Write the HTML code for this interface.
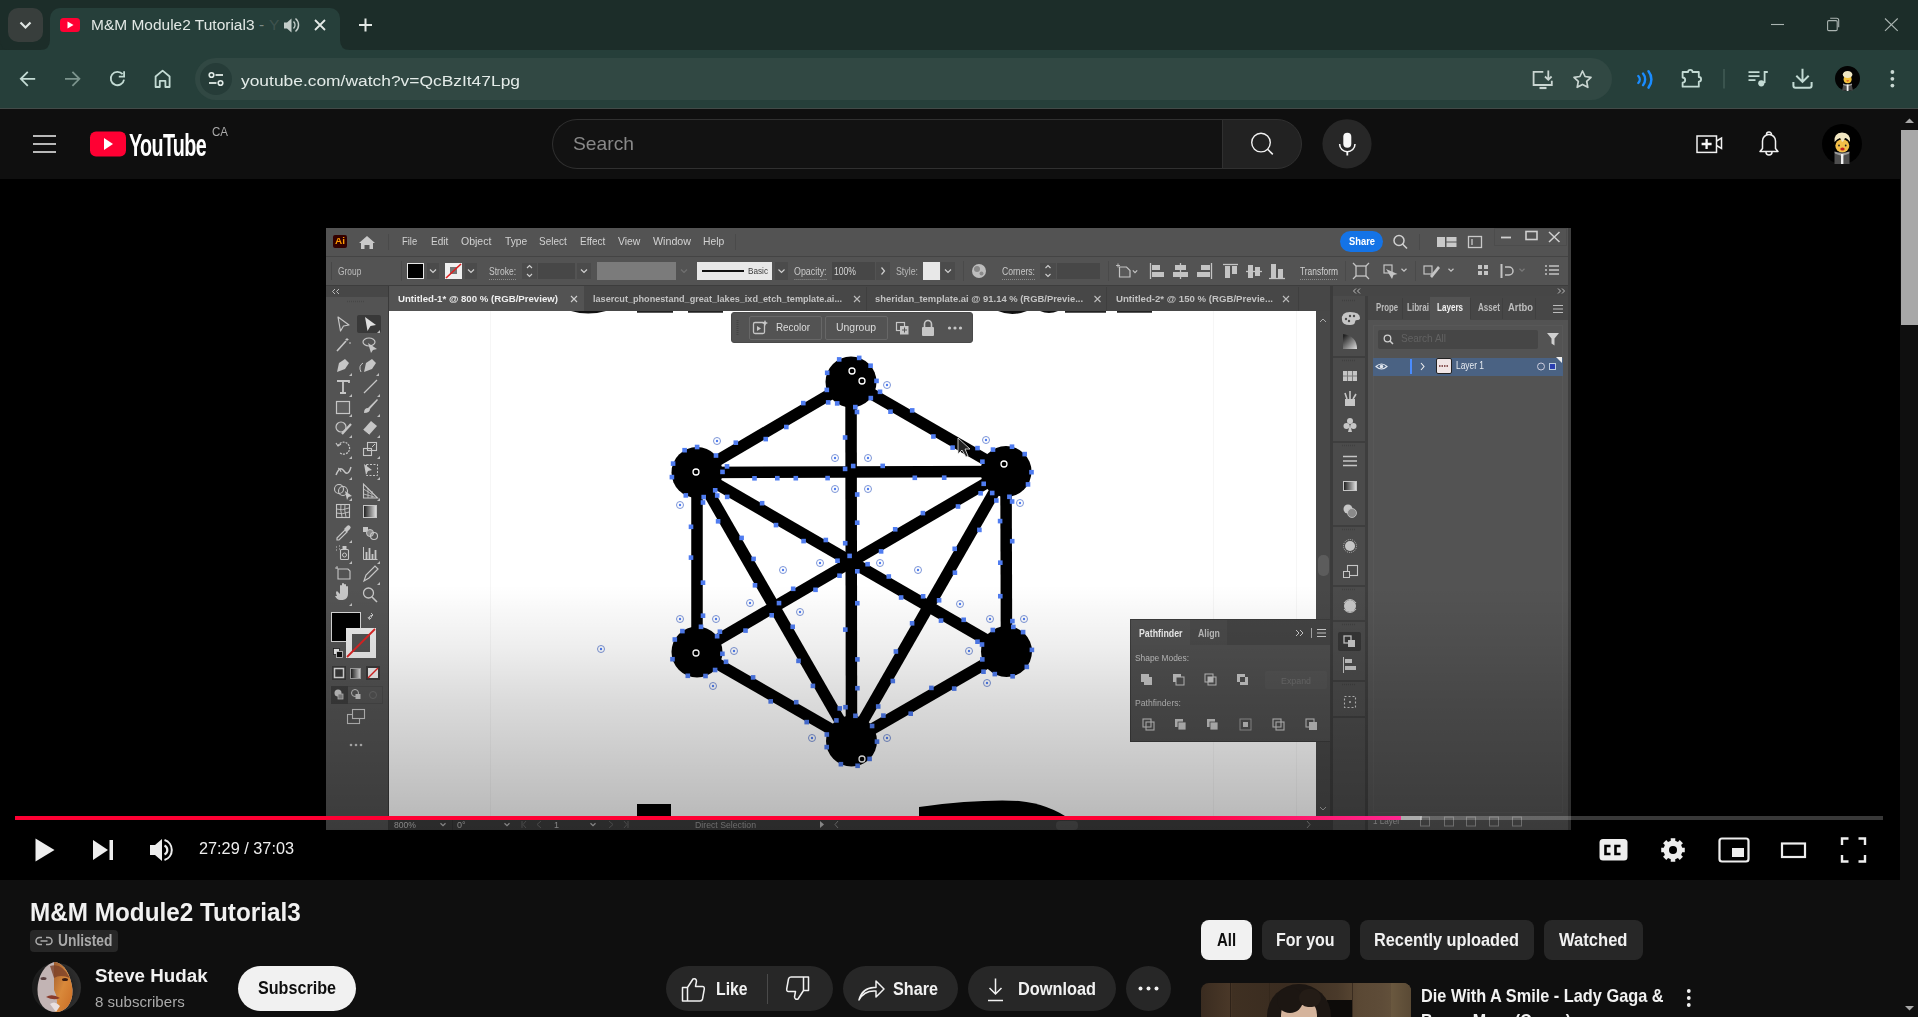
<!DOCTYPE html>
<html><head><meta charset="utf-8">
<style>
*{box-sizing:border-box;margin:0;padding:0}
html,body{width:1918px;height:1017px;overflow:hidden;background:#0f0f0f;font-family:"Liberation Sans",sans-serif}
.a{position:absolute}
svg{position:absolute;overflow:visible}
.t{position:absolute;white-space:nowrap;line-height:1}
</style></head><body>
<div class="a" style="left:0;top:0;width:1918px;height:50px;background:#1c2d29"></div>
<div class="a" style="left:8px;top:8px;width:35px;height:34px;border-radius:10px;background:#383e3c"></div>
<svg style="left:0;top:0" width="50" height="50"><path d="M20.5 22.5 L25.5 27.5 L30.5 22.5" fill="none" stroke="#dfe6e3" stroke-width="2.2"/></svg>
<div class="a" style="left:50px;top:8px;width:290px;height:44px;border-radius:10px 10px 0 0;background:#263f3a"></div>
<svg style="left:0;top:0" width="400" height="60">
 <path d="M40 50 Q50 50 50 40 L50 50 Z" fill="#263f3a"/>
 <path d="M340 40 Q340 50 350 50 L340 50 Z" fill="#263f3a"/>
</svg>
<div class="a" style="left:60px;top:18px;width:20px;height:14px;border-radius:3.5px;background:#ff0033"></div>
<svg style="left:0;top:0" width="100" height="50"><path d="M67.5 21.5 L73.5 25 L67.5 28.5Z" fill="#fff"/></svg>
<svg style="left:0;top:0" width="400" height="50">
 <path d="M284 22.5 h3 l4.5-4 v14 l-4.5-4 h-3z" fill="#dfe6e3" opacity="0.85"/>
 <path d="M293.5 21.5 a5 5 0 0 1 0 7" fill="none" stroke="#dfe6e3" stroke-width="1.5" opacity="0.85"/>
 <path d="M295.5 18.5 a8.5 8.5 0 0 1 0 13" fill="none" stroke="#dfe6e3" stroke-width="1.5" opacity="0.85"/>
 <path d="M315 20 L325 30 M325 20 L315 30" stroke="#e3e9e6" stroke-width="1.8"/>
 <path d="M359 25 h13 M365.5 18.5 v13" stroke="#e3e9e6" stroke-width="2"/>
</svg>
<svg style="left:0;top:0" width="1918" height="50">
 <path d="M1771 24.5 h13" stroke="#aab4b1" stroke-width="1.1"/>
 <rect x="1827.6" y="20.6" width="9.6" height="10" fill="none" stroke="#aab4b1" stroke-width="1.1" rx="1.2"/>
 <path d="M1830.2 18.2 h6.5 a2 2 0 0 1 2 2 v7" fill="none" stroke="#aab4b1" stroke-width="1.1"/>
 <path d="M1885 18.5 L1897.7 30.8 M1897.7 18.5 L1885 30.8" stroke="#aab4b1" stroke-width="1.1"/>
</svg>
<div class="a" style="left:0;top:50px;width:1918px;height:58px;background:#263f3a"></div>
<svg style="left:0;top:40px" width="30" height="20"><path d="M0 10 L0 0 Q0 10 10 10Z" fill="#1c2d29"/></svg>
<div class="a" style="left:0;top:108px;width:1918px;height:1px;background:#434a48"></div>
<svg style="left:0;top:0" width="200" height="108">
 <path d="M35.2 78.8 H21 M27.8 71.8 L20.8 78.8 L27.8 85.8" fill="none" stroke="#c3dbd4" stroke-width="1.8"/>
 <path d="M65 78.8 H79.2 M72.4 71.8 L79.4 78.8 L72.4 85.8" fill="none" stroke="#7c948d" stroke-width="1.8"/>
 <path d="M124.05 79.66 A6.7 6.7 0 1 1 122.6 74.2" fill="none" stroke="#c3dbd4" stroke-width="1.8"/>
 <path d="M118.8 76.7 H124.1 V71.2" fill="none" stroke="#c3dbd4" stroke-width="1.8"/>
 <path d="M155.6 87 V76.5 L162.6 70.6 L169.6 76.5 V87 H165.4 V80.8 H159.8 V87Z" fill="none" stroke="#c3dbd4" stroke-width="1.8" stroke-linejoin="round"/>
</svg>
<div class="a" style="left:195px;top:58px;width:1417px;height:42px;border-radius:21px;background:#314843"></div>
<div class="a" style="left:200px;top:63px;width:32px;height:32px;border-radius:16px;background:#263c38"></div>
<svg style="left:0;top:0" width="260" height="108">
 <circle cx="211.5" cy="75" r="2.3" fill="none" stroke="#e1ebe7" stroke-width="1.6"/>
 <path d="M215.5 75 H223" stroke="#e1ebe7" stroke-width="1.8"/>
 <circle cx="220.5" cy="83" r="2.3" fill="none" stroke="#e1ebe7" stroke-width="1.6"/>
 <path d="M209 83 H216.5" stroke="#e1ebe7" stroke-width="1.8"/>
</svg>
<svg style="left:0;top:0" width="1918" height="108">
 <path d="M1543.3 71.8 H1533.6 V85 H1551.8 V80.8" fill="none" stroke="#c9d5d1" stroke-width="1.8"/>
 <path d="M1539.5 88 h7" stroke="#c9d5d1" stroke-width="2.2"/>
 <path d="M1548.3 70.5 v9 M1545 76.5 l3.3 3.3 l3.3-3.3" fill="none" stroke="#c9d5d1" stroke-width="1.8"/>
 <path d="M1582.5 71 l2.6 5.5 5.9 0.8 -4.3 4.1 1.1 5.9 -5.3-2.9 -5.3 2.9 1.1-5.9 -4.3-4.1 5.9-0.8z" fill="none" stroke="#c9d5d1" stroke-width="1.7" stroke-linejoin="round"/>
 <path d="M1638.3 76 a5 5 0 0 1 0 7" fill="none" stroke="#1a8cff" stroke-width="2.4" stroke-linecap="round"/>
 <path d="M1643 73.6 a9 9 0 0 1 0 11.6" fill="none" stroke="#1a8cff" stroke-width="2.4" stroke-linecap="round"/>
 <path d="M1648.5 71.3 a13 13 0 0 1 0 16.3" fill="none" stroke="#1a8cff" stroke-width="2.5" stroke-linecap="round"/>
 <path d="M1682.6 72 h5.5 a2.2 2.2 0 0 1 4.4 0 h6.3 v5 a2.3 2.3 0 0 1 0 4.6 v5.1 h-16.2 v-4 a2.6 2.6 0 0 0 0-5.2z" fill="none" stroke="#c3dbd4" stroke-width="1.8" stroke-linejoin="round"/>
 <path d="M1724 69 v19.5" stroke="#4f6a63" stroke-width="1"/>
 <path d="M1748.5 72.2 h11 M1748.5 76.2 h11 M1748.5 80.2 h7" stroke="#c3dbd4" stroke-width="1.8"/>
 <path d="M1764.6 83 v-11 h3.2" fill="none" stroke="#c3dbd4" stroke-width="1.8"/>
 <circle cx="1761.3" cy="83.3" r="3.1" fill="#c3dbd4"/>
 <path d="M1802.5 68.7 v13 M1796.3 75.7 l6.2 6.2 l6.2-6.2" fill="none" stroke="#c3dbd4" stroke-width="2"/>
 <path d="M1793.4 82 v3.8 a2 2 0 0 0 2 2 h14.2 a2 2 0 0 0 2-2 v-3.8" fill="none" stroke="#c3dbd4" stroke-width="2"/>
 <circle cx="1847.5" cy="78.5" r="12.5" fill="#030303"/>
 <path d="M1843.5 84 h8 l1.5 6.5 h-11z" fill="#4a4a4a"/>
 <path d="M1843 83.5 l4.5 1.5 l4.5 -1.5 v1.5 l-4.5 1.5 l-4.5-1.5z" fill="#9a9a9a"/>
 <rect x="1846.7" y="84.5" width="1.8" height="6.5" fill="#f0f0f0"/>
 <ellipse cx="1847.6" cy="79.2" rx="4" ry="4" fill="#f2c33c"/>
 <ellipse cx="1847.6" cy="74.5" rx="4.8" ry="3.6" fill="#efe7c4"/>
 <path d="M1846.2 80.6 q1.5 1.8 3 0z" fill="#d02020"/>
 <circle cx="1892.4" cy="72" r="1.9" fill="#c9d8d3"/><circle cx="1892.4" cy="78.8" r="1.9" fill="#c9d8d3"/><circle cx="1892.4" cy="85.6" r="1.9" fill="#c9d8d3"/>
</svg>
<div class="t" style="left:90.70px;top:17.42px;font-size:15.5px;color:#e2e8e5;font-weight:normal;font-family:'Liberation Sans';transform:scaleX(0.9989);transform-origin:0 0;">M&amp;M Module2 Tutorial3</div>
<div class="t" style="left:259.00px;top:17.42px;font-size:15.5px;color:#7c8a86;font-weight:normal;font-family:'Liberation Sans';">-</div>
<div class="t" style="left:269.00px;top:17.42px;font-size:15.5px;color:#3f524e;font-weight:normal;font-family:'Liberation Sans';">Y</div>
<div class="t" style="left:241.30px;top:73.12px;font-size:15.5px;color:#e3ebe8;font-weight:normal;font-family:'Liberation Sans';transform:scaleX(1.1224);transform-origin:0 0;">youtube.com/watch?v=QcBzIt47Lpg</div>
<div class="a" style="left:0;top:109px;width:1900px;height:70px;background:#0f0f0f"></div>
<svg style="left:0;top:0" width="260" height="180">
 <path d="M33 136 h23 M33 144 h23 M33 152 h23" stroke="#f1f1f1" stroke-width="1.3"/>
 <rect x="90" y="131.5" width="36" height="25" rx="6" fill="#ff0033"/>
 <path d="M104 138 L113 144 L104 150Z" fill="#fff"/>
</svg>
<div class="a" style="left:552px;top:119px;width:671px;height:50px;border:1px solid #303030;border-right:none;border-radius:25px 0 0 25px;background:#121212"></div>
<div class="a" style="left:1222px;top:119px;width:80px;height:50px;border:1px solid #303030;border-radius:0 25px 25px 0;background:#222222"></div>
<svg style="left:0;top:0" width="1918" height="180">
 <circle cx="1261" cy="142.6" r="9.3" fill="none" stroke="#f1f1f1" stroke-width="1.4"/>
 <path d="M1267.6 149.2 L1272.8 154.4" stroke="#f1f1f1" stroke-width="1.5"/>
 <circle cx="1347" cy="143.8" r="24.6" fill="#272727"/>
 <rect x="1343.3" y="132.8" width="8" height="15" rx="4" fill="#f8f8f8"/>
 <path d="M1339.6 144 a7.7 7.7 0 0 0 15.4 0" fill="none" stroke="#f8f8f8" stroke-width="1.5"/>
 <path d="M1347.3 151.5 v4" stroke="#f8f8f8" stroke-width="1.8"/>
 <rect x="1697" y="136" width="19.5" height="16.4" fill="none" stroke="#f1f1f1" stroke-width="1.5"/>
 <path d="M1716.5 141 l5-3 v10.5 l-5-3" fill="none" stroke="#f1f1f1" stroke-width="1.5"/>
 <path d="M1701.6 144 h10 M1706.6 139 v10" stroke="#f8f8f8" stroke-width="2.3"/>
 <path d="M1760 151.5 h18 l-2.5-3 v-7.5 a6.5 6.5 0 0 0 -13 0 v7.5z M1766.5 134.5 a2.3 2.3 0 0 1 5 0" fill="none" stroke="#f1f1f1" stroke-width="1.5" stroke-linejoin="round"/>
 <path d="M1766 152 a3 3 0 0 0 6 0" fill="none" stroke="#f1f1f1" stroke-width="1.5"/>
 <circle cx="1842" cy="144" r="20" fill="#000"/>
 <path d="M1834.5 164 v-10 l7.5-2.5 l7.5 2.5 v10z" fill="#4e4e4e"/>
 <path d="M1834.5 153.5 l7.5 2.5 l7.5-2.5 v-2 l-7.5 2 l-7.5-2z" fill="#9c9c9c"/>
 <rect x="1841" y="154" width="2.4" height="10" fill="#f2f2f2"/>
 <ellipse cx="1842.3" cy="145.8" rx="7" ry="6.5" fill="#f3be48"/>
 <path d="M1834.5 142 q-1-9 7.5-9.5 q9 0.5 8 9.5 q-3-4-5-4 q-1 3-3 4 q-1-3-2-4 q-3 1-5.5 4z" fill="#f1e6c0"/>
 <circle cx="1839" cy="145.5" r="0.9" fill="#222"/><circle cx="1845.7" cy="145.5" r="0.9" fill="#222"/>
 <ellipse cx="1842.5" cy="149" rx="2.2" ry="1.5" fill="#c42020"/>
</svg>
<div class="t" style="left:129.00px;top:129.54px;font-size:31px;color:#fff;font-weight:bold;font-family:'Liberation Sans';letter-spacing:-1px;transform:scaleX(0.6364);transform-origin:0 0;">YouTube</div>
<div class="t" style="left:211.50px;top:125.42px;font-size:13px;color:#aaaaaa;font-weight:normal;font-family:'Liberation Sans';transform:scaleX(0.8858);transform-origin:0 0;">CA</div>
<div class="t" style="left:573.00px;top:133.96px;font-size:19px;color:#888888;font-weight:normal;font-family:'Liberation Sans';transform:scaleX(1.0132);transform-origin:0 0;">Search</div>
<div class="a" style="left:0;top:179px;width:1900px;height:701px;background:#000"></div>
<div class="a" style="left:0;top:0;width:1918px;height:1017px;filter:blur(0.3px)">
<div class="a" style="left:326px;top:228px;width:1245px;height:602px;background:#535353"></div>
<div class="a" style="left:326px;top:256px;width:1245px;height:1px;background:#444"></div>
<div class="a" style="left:333px;top:235px;width:14px;height:13px;border-radius:2px;background:#330000"></div>
<div class="a" style="left:1340px;top:231px;width:43px;height:21px;border-radius:10.5px;background:#1473e6"></div>
<div class="a" style="left:326px;top:285px;width:1245px;height:1px;background:#3d3d3d"></div>
<div class="a" style="left:407px;top:263px;width:17px;height:16px;background:#000;border:1px solid #e8e8e8"></div>
<div class="a" style="left:427px;top:263px;width:12px;height:16px;background:#4b4b4b"></div>
<div class="a" style="left:445px;top:263px;width:17px;height:16px;background:#f0f0f0"></div>
<div class="a" style="left:465px;top:263px;width:12px;height:16px;background:#4b4b4b"></div>
<div class="a" style="left:522px;top:263px;width:15px;height:16px;background:#4b4b4b"></div>
<div class="a" style="left:538px;top:263px;width:37px;height:16px;background:#474747"></div>
<div class="a" style="left:577px;top:263px;width:14px;height:16px;background:#4b4b4b"></div>
<div class="a" style="left:597px;top:262px;width:79px;height:18px;background:#7b7b7b"></div>
<div class="a" style="left:697px;top:262px;width:75px;height:18px;background:#e8e8e8"></div>
<div class="a" style="left:775px;top:262px;width:13px;height:18px;background:#4b4b4b"></div>
<div class="a" style="left:832px;top:262px;width:43px;height:18px;background:#474747"></div>
<div class="a" style="left:876px;top:262px;width:14px;height:18px;background:#4b4b4b"></div>
<div class="a" style="left:923px;top:262px;width:17px;height:18px;background:#e8e8e8"></div>
<div class="a" style="left:941px;top:262px;width:14px;height:18px;background:#4b4b4b"></div>
<div class="a" style="left:1040px;top:263px;width:16px;height:16px;background:#4b4b4b"></div>
<div class="a" style="left:1057px;top:263px;width:43px;height:16px;background:#474747"></div>
<div class="a" style="left:389px;top:286px;width:941px;height:25px;background:#474747"></div>
<div class="a" style="left:389px;top:286px;width:195px;height:25px;background:#535353"></div>
<svg style="left:0;top:0" width="1918" height="1017"><path d="M359 243 L367 236 L375 243 L373 243 L373 249 L369.5 249 L369.5 245 L364.5 245 L364.5 249 L361 249 L361 243Z" fill="#c9c9c9"/>
<path d="M388.5 234 v16" stroke="#4a4a4a" stroke-width="1"/>
<path d="M735.5 234 v16" stroke="#4a4a4a" stroke-width="1"/>
<circle cx="1399" cy="240.5" r="5" fill="none" stroke="#d0d0d0" stroke-width="1.5"/><path d="M1402.5 244 l4.5 4.5" stroke="#d0d0d0" stroke-width="1.6"/>
<path d="M1419.5 234 v16" stroke="#4a4a4a" stroke-width="1"/>
<rect x="1437" y="237" width="8" height="10" fill="#c9c9c9"/><rect x="1446.5" y="237" width="10" height="4.5" fill="#c9c9c9"/><rect x="1446.5" y="242.5" width="10" height="4.5" fill="#c9c9c9"/>
<rect x="1468.5" y="236.5" width="13" height="11" fill="none" stroke="#c9c9c9" stroke-width="1.3"/><path d="M1472 239 v6" stroke="#c9c9c9" stroke-width="1.3"/>
<rect x="1494.5" y="228.5" width="72" height="17" fill="none" stroke="#4c4c4c" stroke-width="1"/>
<path d="M1501 237.5 h10" stroke="#d0d0d0" stroke-width="1.8"/>
<rect x="1526" y="231.5" width="11" height="8" fill="none" stroke="#d0d0d0" stroke-width="1.6"/>
<path d="M1549 232 l10.5 10 M1559.5 232 l-10.5 10" stroke="#d0d0d0" stroke-width="1.5"/>
<path d="M331.5 262 v18" stroke="#474747" stroke-width="1"/>
<path d="M401.5 261 v20" stroke="#4a4a4a" stroke-width="1"/>
<path d="M430 269.5 L433 272.5 L436 269.5" fill="none" stroke="#cfcfcf" stroke-width="1.2"/>
<rect x="450" y="267" width="7" height="7" fill="#777"/><path d="M446 278 L461 264" stroke="#e02020" stroke-width="1.6"/>
<path d="M468 269.5 L471 272.5 L474 269.5" fill="none" stroke="#cfcfcf" stroke-width="1.2"/>
<path d="M489 279.5 h27" stroke="#9a9a9a" stroke-width="0.8" stroke-dasharray="1 1"/>
<path d="M527 268 l2.5-2.5 l2.5 2.5 M527 274 l2.5 2.5 l2.5-2.5" fill="none" stroke="#cfcfcf" stroke-width="1.1"/>
<path d="M581 269.5 L584 272.5 L587 269.5" fill="none" stroke="#cfcfcf" stroke-width="1.2"/>
<path d="M681 269.5 L684 272.5 L687 269.5" fill="none" stroke="#707070" stroke-width="1.2"/>
<path d="M702 271 h42" stroke="#111" stroke-width="2"/>
<path d="M778.5 269.5 L781.5 272.5 L784.5 269.5" fill="none" stroke="#cfcfcf" stroke-width="1.2"/>
<path d="M794.4 279.5 h32.6" stroke="#9a9a9a" stroke-width="0.8" stroke-dasharray="1 1"/>
<path d="M881.5 267.5 l3 3.5 l-3 3.5" fill="none" stroke="#cfcfcf" stroke-width="1.2"/>
<path d="M945 269.5 L948 272.5 L951 269.5" fill="none" stroke="#cfcfcf" stroke-width="1.2"/>
<path d="M963.5 261 v20" stroke="#4a4a4a" stroke-width="1"/>
<circle cx="979" cy="271" r="7" fill="#bdbdbd"/><circle cx="977" cy="269" r="3" fill="#888"/><circle cx="981.5" cy="273.5" r="2" fill="#8a8a8a"/>
<path d="M1002 279.5 h33" stroke="#9a9a9a" stroke-width="0.8" stroke-dasharray="1 1"/>
<path d="M1045.5 268 l2.5-2.5 l2.5 2.5 M1045.5 274 l2.5 2.5 l2.5-2.5" fill="none" stroke="#cfcfcf" stroke-width="1.1"/>
<path d="M1108.5 261 v20" stroke="#4a4a4a" stroke-width="1"/>
<path d="M1119.5 267 h7 l3.5 3.5 v6.5 h-10.5z" fill="#5a5a5a" stroke="#c4c4c4" stroke-width="1.2"/><path d="M1116 265.5 h4 M1118 263.5 v4" stroke="#c4c4c4" stroke-width="0.9"/><path d="M1132.8 270.4 L1135 272.6 L1137.2 270.4" fill="none" stroke="#c4c4c4" stroke-width="1.2"/>
<path d="M1150.5 263 v16" stroke="#c4c4c4" stroke-width="1.3"/><rect x="1152" y="265" width="8" height="5" fill="#c4c4c4"/><rect x="1152" y="272" width="12" height="5" fill="#c4c4c4"/>
<path d="M1180.5 263 v16" stroke="#c4c4c4" stroke-width="1.3"/><rect x="1175" y="265" width="11" height="5" fill="#c4c4c4"/><rect x="1173" y="272" width="15" height="5" fill="#c4c4c4"/>
<path d="M1211.5 263 v16" stroke="#c4c4c4" stroke-width="1.3"/><rect x="1201" y="265" width="9" height="5" fill="#c4c4c4"/><rect x="1197" y="272" width="13" height="5" fill="#c4c4c4"/>
<path d="M1223 264.5 h15" stroke="#c4c4c4" stroke-width="1.3"/><rect x="1225" y="266" width="5" height="12" fill="#c4c4c4"/><rect x="1232" y="266" width="5" height="8" fill="#c4c4c4"/>
<path d="M1246 271.5 h16" stroke="#c4c4c4" stroke-width="1.3"/><rect x="1248" y="265" width="5" height="13" fill="#c4c4c4"/><rect x="1255" y="267" width="5" height="9" fill="#c4c4c4"/>
<path d="M1269 278.5 h16" stroke="#c4c4c4" stroke-width="1.3"/><rect x="1271" y="264" width="5" height="14" fill="#c4c4c4"/><rect x="1278" y="269" width="5" height="9" fill="#c4c4c4"/>
<path d="M1300 279.5 h38" stroke="#9a9a9a" stroke-width="0.8" stroke-dasharray="1 1"/>
<path d="M1345.5 261 v20" stroke="#4a4a4a" stroke-width="1"/>
<rect x="1356" y="266" width="10" height="10" fill="none" stroke="#c4c4c4" stroke-width="1.3"/><path d="M1353 263 l3 3 M1369 263 l-3 3 M1353 279 l3-3 M1369 279 l-3-3" stroke="#c4c4c4" stroke-width="1.3"/>
<rect x="1384" y="265" width="8" height="8" fill="none" stroke="#c4c4c4" stroke-width="1.2"/><path d="M1386 269 l6 10 l1.5-4 l4-1z" fill="#c4c4c4"/><path d="M1401.5 268.75 L1404 271.25 L1406.5 268.75" fill="none" stroke="#c4c4c4" stroke-width="1.2"/>
<path d="M1415.5 261 v20" stroke="#4a4a4a" stroke-width="1"/>
<rect x="1424" y="266" width="8" height="8" fill="none" stroke="#c4c4c4" stroke-width="1.2"/><path d="M1430 276 l8-10 l2 2 l-8 10z" fill="#c4c4c4"/><path d="M1448.5 268.75 L1451 271.25 L1453.5 268.75" fill="none" stroke="#c4c4c4" stroke-width="1.2"/>
<rect x="1478" y="265" width="4" height="4" fill="#c4c4c4"/><rect x="1484" y="265" width="4" height="4" fill="#c4c4c4"/><rect x="1478" y="271" width="4" height="4" fill="#c4c4c4"/><rect x="1484" y="271" width="4" height="4" fill="#c4c4c4"/>
<path d="M1501.5 264 v14" stroke="#c4c4c4" stroke-width="2"/><path d="M1505 267 h4 a4 4 0 0 1 0 8 h-4" fill="none" stroke="#c4c4c4" stroke-width="1.5"/><path d="M1519.5 268.75 L1522 271.25 L1524.5 268.75" fill="none" stroke="#7a7a7a" stroke-width="1.2"/>
<path d="M1545 266 h2 M1549 266 h10 M1545 270 h2 M1549 270 h10 M1545 274 h2 M1549 274 h10" stroke="#c4c4c4" stroke-width="1.5"/>
<path d="M571 296 l6 6 M577 296 l-6 6" stroke="#cfcfcf" stroke-width="1.1"/>
<path d="M854 296 l6 6 M860 296 l-6 6" stroke="#bdbdbd" stroke-width="1.1"/>
<path d="M866.5 287 v24" stroke="#3f3f3f" stroke-width="1"/>
<path d="M1094.5 296 l6 6 M1100.5 296 l-6 6" stroke="#bdbdbd" stroke-width="1.1"/>
<path d="M1106.5 287 v24" stroke="#3f3f3f" stroke-width="1"/>
<path d="M1283 296 l6 6 M1289 296 l-6 6" stroke="#bdbdbd" stroke-width="1.1"/>
<path d="M1298.5 287 v24" stroke="#3f3f3f" stroke-width="1"/></svg>
<div class="t" style="left:334.50px;top:237.14px;font-size:8.5px;color:#ff9a00;font-weight:bold;font-family:'Liberation Sans';transform:scaleX(1.1765);transform-origin:0 0;">Ai</div>
<div class="t" style="left:402.30px;top:236.24px;font-size:11px;color:#d2d2d2;font-weight:normal;font-family:'Liberation Sans';transform:scaleX(0.8571);transform-origin:0 0;">File</div>
<div class="t" style="left:430.70px;top:236.24px;font-size:11px;color:#d2d2d2;font-weight:normal;font-family:'Liberation Sans';transform:scaleX(0.9120);transform-origin:0 0;">Edit</div>
<div class="t" style="left:461.30px;top:236.24px;font-size:11px;color:#d2d2d2;font-weight:normal;font-family:'Liberation Sans';transform:scaleX(0.9561);transform-origin:0 0;">Object</div>
<div class="t" style="left:505.00px;top:236.24px;font-size:11px;color:#d2d2d2;font-weight:normal;font-family:'Liberation Sans';transform:scaleX(0.9346);transform-origin:0 0;">Type</div>
<div class="t" style="left:539.30px;top:236.24px;font-size:11px;color:#d2d2d2;font-weight:normal;font-family:'Liberation Sans';transform:scaleX(0.9059);transform-origin:0 0;">Select</div>
<div class="t" style="left:579.70px;top:236.24px;font-size:11px;color:#d2d2d2;font-weight:normal;font-family:'Liberation Sans';transform:scaleX(0.9056);transform-origin:0 0;">Effect</div>
<div class="t" style="left:618.30px;top:236.24px;font-size:11px;color:#d2d2d2;font-weight:normal;font-family:'Liberation Sans';transform:scaleX(0.9469);transform-origin:0 0;">View</div>
<div class="t" style="left:652.70px;top:236.24px;font-size:11px;color:#d2d2d2;font-weight:normal;font-family:'Liberation Sans';transform:scaleX(0.9712);transform-origin:0 0;">Window</div>
<div class="t" style="left:703.00px;top:236.24px;font-size:11px;color:#d2d2d2;font-weight:normal;font-family:'Liberation Sans';transform:scaleX(0.9414);transform-origin:0 0;">Help</div>
<div class="t" style="left:1349.00px;top:235.82px;font-size:10.5px;color:#ffffff;font-weight:bold;font-family:'Liberation Sans';transform:scaleX(0.8908);transform-origin:0 0;">Share</div>
<div class="t" style="left:337.50px;top:266.70px;font-size:10px;color:#bcbcbc;font-weight:normal;font-family:'Liberation Sans';transform:scaleX(0.8382);transform-origin:0 0;">Group</div>
<div class="t" style="left:489.00px;top:266.70px;font-size:10px;color:#c8c8c8;font-weight:normal;font-family:'Liberation Sans';transform:scaleX(0.8521);transform-origin:0 0;">Stroke:</div>
<div class="t" style="left:748.00px;top:267.06px;font-size:9px;color:#3a3a3a;font-weight:normal;font-family:'Liberation Sans';transform:scaleX(0.9084);transform-origin:0 0;">Basic</div>
<div class="t" style="left:794.40px;top:266.70px;font-size:10px;color:#c8c8c8;font-weight:normal;font-family:'Liberation Sans';transform:scaleX(0.8886);transform-origin:0 0;">Opacity:</div>
<div class="t" style="left:834.00px;top:266.70px;font-size:10px;color:#d6d6d6;font-weight:normal;font-family:'Liberation Sans';transform:scaleX(0.8601);transform-origin:0 0;">100%</div>
<div class="t" style="left:896.00px;top:266.70px;font-size:10px;color:#b8b8b8;font-weight:normal;font-family:'Liberation Sans';transform:scaleX(0.8795);transform-origin:0 0;">Style:</div>
<div class="t" style="left:1002.00px;top:266.70px;font-size:10px;color:#c8c8c8;font-weight:normal;font-family:'Liberation Sans';transform:scaleX(0.8603);transform-origin:0 0;">Corners:</div>
<div class="t" style="left:1300.00px;top:266.70px;font-size:10px;color:#d0d0d0;font-weight:normal;font-family:'Liberation Sans';transform:scaleX(0.8406);transform-origin:0 0;">Transform</div>
<div class="t" style="left:398.00px;top:294.23px;font-size:9.8px;color:#efefef;font-weight:bold;font-family:'Liberation Sans';transform:scaleX(0.9843);transform-origin:0 0;">Untitled-1* @ 800 % (RGB/Preview)</div>
<div class="t" style="left:593.00px;top:294.23px;font-size:9.8px;color:#c2c2c2;font-weight:bold;font-family:'Liberation Sans';transform:scaleX(0.9294);transform-origin:0 0;">lasercut_phonestand_great_lakes_ixd_etch_template.ai...</div>
<div class="t" style="left:875.00px;top:294.23px;font-size:9.8px;color:#c2c2c2;font-weight:bold;font-family:'Liberation Sans';transform:scaleX(0.9609);transform-origin:0 0;">sheridan_template.ai @ 91.14 % (RGB/Previe...</div>
<div class="t" style="left:1115.50px;top:294.23px;font-size:9.8px;color:#c2c2c2;font-weight:bold;font-family:'Liberation Sans';transform:scaleX(0.9823);transform-origin:0 0;">Untitled-2* @ 150 % (RGB/Previe...</div>
<div class="a" style="left:326px;top:286px;width:62px;height:11px;background:#474747"></div>
<div class="a" style="left:388px;top:286px;width:1px;height:544px;background:#3a3a3a"></div>
<div class="a" style="left:357px;top:315px;width:24px;height:18px;background:#393939;border-radius:2px"></div>
<div class="a" style="left:363px;top:505px;width:14px;height:13px;border:1px solid #c6c6c6;background:linear-gradient(90deg,#222,#ddd)"></div>
<div class="a" style="left:331px;top:612px;width:30px;height:30px;background:#000;border:1px solid #d8d8d8"></div>
<div class="a" style="left:346px;top:628px;width:30px;height:30px;background:#ececec"></div>
<div class="a" style="left:352px;top:634px;width:18px;height:18px;background:#535353"></div>
<div class="a" style="left:332px;top:666px;width:14px;height:14px;background:#3a3a3a"></div>
<div class="a" style="left:350px;top:668px;width:11px;height:11px;background:linear-gradient(90deg,#222,#ddd);border:1px solid #aaa"></div>
<div class="a" style="left:366px;top:666px;width:14px;height:14px;background:#3a3a3a"></div>
<div class="a" style="left:368px;top:668px;width:10px;height:10px;background:#eee"></div>
<div class="a" style="left:331px;top:686px;width:52px;height:18px;border:1px solid #4a4a4a"></div>
<div class="a" style="left:331px;top:686px;width:17px;height:18px;background:#3d3d3d"></div>
<svg style="left:0;top:0" width="1918" height="1017"><path d="M335 289 l-2.5 2.5 l2.5 2.5 M339 289 l-2.5 2.5 l2.5 2.5" fill="none" stroke="#bdbdbd" stroke-width="1"/>
<path d="M347 301.5 h17" stroke="#474747" stroke-width="1.5" stroke-dasharray="1 1"/>
<path d="M338 317 L349 325 L343.5 326 L340.5 331 Z" fill="none" stroke="#c6c6c6" stroke-width="1.2" stroke-linejoin="round"/>
<path d="M365 317 L376 325 L370.5 326 L367.5 331 Z" fill="#e0e0e0"/><path d="M380 330 l-3 3 h3z" fill="#bdbdbd"/>
<path d="M337 351 L346 341" stroke="#c6c6c6" stroke-width="1.6"/><path d="M347 338 v3 M345.5 339.5 h3 M349 343 h2" stroke="#c6c6c6" stroke-width="1"/>
<ellipse cx="369" cy="342" rx="6" ry="4" fill="none" stroke="#c6c6c6" stroke-width="1.2"/><path d="M368 343 L377 349 L373 350 L371 353Z" fill="#c6c6c6"/>
<path d="M337 372 L339 363 L345 359 L349 363 L345 369 Z" fill="#c6c6c6"/><path d="M352 373 l-3 3 h3z" fill="#bdbdbd"/>
<path d="M364 372 L366 363 L372 359 L376 363 L372 369 Z" fill="#c6c6c6"/><path d="M379 373 l-3 3 h3z" fill="#bdbdbd"/>
<path d="M361 372 q-3-6 2-9" fill="none" stroke="#c6c6c6" stroke-width="1"/>
<path d="M337 381 h12 v2 M343 381 v12 M340 393 h6" fill="none" stroke="#c6c6c6" stroke-width="1.8"/><path d="M352 394 l-3 3 h3z" fill="#bdbdbd"/>
<path d="M364 393 L377 380" stroke="#c6c6c6" stroke-width="1.2"/><path d="M380 394 l-3 3 h3z" fill="#bdbdbd"/>
<rect x="336.5" y="401.5" width="13" height="12" fill="#5e5e5e" stroke="#c6c6c6" stroke-width="1.2"/><path d="M352 414 l-3 3 h3z" fill="#bdbdbd"/>
<path d="M364 413 q0-5 4-5 l9-9 l1 1 l-8 9 q0 4-6 4z" fill="#c6c6c6"/><path d="M380 414 l-3 3 h3z" fill="#bdbdbd"/>
<circle cx="341" cy="427" r="5" fill="#5e5e5e" stroke="#c6c6c6" stroke-width="1.2"/><path d="M342 434 L351 424" stroke="#c6c6c6" stroke-width="2.2"/><path d="M352 435 l-3 3 h3z" fill="#bdbdbd"/>
<path d="M363 430 l8-9 l6 5 l-8 9z" fill="#c6c6c6"/><path d="M363 430 l6 5" stroke="#535353" stroke-width="1"/><path d="M380 435 l-3 3 h3z" fill="#bdbdbd"/>
<path d="M338 446 a6 6 0 1 1 2 7" fill="none" stroke="#c6c6c6" stroke-width="1.2" stroke-dasharray="2 1"/><path d="M336 443 l2 3 l3-2" fill="none" stroke="#c6c6c6" stroke-width="1.2"/><path d="M352 456 l-3 3 h3z" fill="#bdbdbd"/>
<rect x="363.5" y="448.5" width="8" height="7" fill="none" stroke="#c6c6c6" stroke-width="1.1"/><rect x="367.5" y="442.5" width="9" height="8" fill="none" stroke="#c6c6c6" stroke-width="1.1"/><path d="M372 447 l3-3" stroke="#c6c6c6" stroke-width="1"/><path d="M380 456 l-3 3 h3z" fill="#bdbdbd"/>
<path d="M336 475 q4-10 8-4 q4 6 7-4" fill="none" stroke="#c6c6c6" stroke-width="1.4"/><path d="M338 468 q3 1 3 4" fill="none" stroke="#c6c6c6" stroke-width="1"/><path d="M352 477 l-3 3 h3z" fill="#bdbdbd"/>
<path d="M364 464 L372 470 L368 471 L366 475Z" fill="#c6c6c6"/><rect x="366.5" y="464.5" width="11" height="11" fill="none" stroke="#c6c6c6" stroke-width="1" stroke-dasharray="2 1.5"/><path d="M380 477 l-3 3 h3z" fill="#bdbdbd"/>
<circle cx="339" cy="489" r="4.5" fill="none" stroke="#c6c6c6" stroke-width="1.1"/><circle cx="343" cy="491" r="4.5" fill="none" stroke="#c6c6c6" stroke-width="1.1"/><path d="M345 491 L352 496 L348.5 497 L347 500Z" fill="#c6c6c6"/><path d="M352 498 l-3 3 h3z" fill="#bdbdbd"/>
<path d="M363.5 484 v14 h14 z" fill="none" stroke="#c6c6c6" stroke-width="1.1"/><path d="M363.5 489 l8 5 M363.5 494 l11 3 M368 488 v10 M372 491 v7" stroke="#c6c6c6" stroke-width="0.8"/><path d="M380 498 l-3 3 h3z" fill="#bdbdbd"/>
<rect x="336.5" y="504.5" width="13" height="13" fill="none" stroke="#c6c6c6" stroke-width="1.1"/><path d="M336 509 q6 2 13-1 M336 513 q6 2 13-1 M341 504 q-1 6 1 13 M345 504 q-1 6 1 13" fill="none" stroke="#c6c6c6" stroke-width="0.9"/>
<path d="M337 538 l8-8 l2 2 l-8 8 l-2 0z" fill="none" stroke="#c6c6c6" stroke-width="1.2"/><path d="M344 529 l3-3 a1.5 1.5 0 0 1 3 3 l-3 3z" fill="#c6c6c6"/><path d="M352 540 l-3 3 h3z" fill="#bdbdbd"/>
<rect x="363" y="527" width="5" height="5" fill="#c6c6c6"/><circle cx="370" cy="533" r="3.5" fill="#888" stroke="#c6c6c6" stroke-width="1"/><circle cx="374" cy="536" r="3.5" fill="none" stroke="#c6c6c6" stroke-width="1.1"/>
<path d="M336 547 h1 M336 550 h1 M339 546 h1 M339 549 h1" stroke="#c6c6c6" stroke-width="1.2"/><rect x="340.5" y="549.5" width="8" height="10" rx="1" fill="none" stroke="#c6c6c6" stroke-width="1.1"/><circle cx="344.5" cy="555" r="2" fill="none" stroke="#c6c6c6" stroke-width="1"/><rect x="342.5" y="546" width="4" height="3" fill="#c6c6c6"/><path d="M352 561 l-3 3 h3z" fill="#bdbdbd"/>
<path d="M363.5 547 v12.5 h14" fill="none" stroke="#c6c6c6" stroke-width="1"/><path d="M366.5 559 v-7 M369.5 559 v-11 M372.5 559 v-5 M375.5 559 v-9" stroke="#c6c6c6" stroke-width="1.8"/><path d="M380 561 l-3 3 h3z" fill="#bdbdbd"/>
<path d="M338 569 h10 l2 2 v8 h-12z" fill="none" stroke="#c6c6c6" stroke-width="1.1"/><path d="M335 568 h3 M337 566 v3" stroke="#c6c6c6" stroke-width="0.9"/>
<path d="M364 581 l2-6 l9-9 l3 3 l-9 9z" fill="none" stroke="#c6c6c6" stroke-width="1.2"/><path d="M380 582 l-3 3 h3z" fill="#bdbdbd"/>
<path d="M337 596 q-2-4 0-5 l3 3 v-8 a1 1 0 0 1 2 0 v5 v-7 a1 1 0 0 1 2 0 v7 v-6 a1 1 0 0 1 2 0 v6 v-4 a1 1 0 0 1 2 0 v7 q0 5-5 6 h-3 q-3 0-5-4z" fill="#c6c6c6"/><path d="M352 603 l-3 3 h3z" fill="#bdbdbd"/>
<circle cx="368.5" cy="593" r="5" fill="none" stroke="#c6c6c6" stroke-width="1.3"/><path d="M372 597 l5 5" stroke="#c6c6c6" stroke-width="1.6"/>
<path d="M347 657 L375 629" stroke="#e02424" stroke-width="1.8"/>
<path d="M369 619 a4 4 0 0 1 4 -4 M371 613 l2 2 l-2 2 M368 617 l1.5 2.5 l2-2" fill="none" stroke="#c6c6c6" stroke-width="1"/>
<rect x="333.5" y="648.5" width="6" height="6" fill="#eee" stroke="#222" stroke-width="0.8"/><rect x="336.5" y="651.5" width="6" height="6" fill="#111" stroke="#ddd" stroke-width="0.8"/>
<rect x="334.5" y="668.5" width="9" height="9" fill="none" stroke="#ddd" stroke-width="1.5"/>
<path d="M368 678 L378 668" stroke="#e02424" stroke-width="1.5"/>
<circle cx="338" cy="693" r="3.5" fill="#c6c6c6"/><rect x="338" y="694" width="5" height="5" fill="#888" stroke="#c6c6c6" stroke-width="0.8"/>
<circle cx="355" cy="693" r="3.5" fill="none" stroke="#c6c6c6" stroke-width="1"/><rect x="355.5" y="694" width="5" height="5" fill="#c6c6c6"/>
<circle cx="373" cy="695" r="3.5" fill="none" stroke="#6a6a6a" stroke-width="1"/>
<rect x="347.5" y="714.5" width="12" height="9" fill="none" stroke="#c6c6c6" stroke-width="1.1"/><rect x="352.5" y="709.5" width="12" height="9" fill="#535353" stroke="#c6c6c6" stroke-width="1.1"/>
<circle cx="351" cy="745" r="1.3" fill="#c6c6c6"/><circle cx="356" cy="745" r="1.3" fill="#c6c6c6"/><circle cx="361" cy="745" r="1.3" fill="#c6c6c6"/></svg>

<div class="a" style="left:389px;top:311px;width:927px;height:509px;background:#ffffff"></div>
<svg style="left:0;top:0" width="1918" height="1017"><path d="M490.5 311 v509 M1213.5 311 v509 M1296.5 311 v509" stroke="#f6f6f6" stroke-width="1"/>
<path d="M571 311 q17 5 35 0z" fill="#111"/><path d="M637 311 h36 v1.8 h-36z M688 311 h35 v1.8 h-35z" fill="#222"/>
<path d="M998 311 q14 6 29 0z M1040 311 q9 4 18 0z" fill="#111"/><path d="M1065 311 h41 v1.8 h-41z M1117 311 h35 v1.8 h-35z" fill="#222"/>
<path d="M637 804 h34 v16 h-34z" fill="#000"/>
<path d="M919 807 q60-8 100-6 q30 3 52 19 h-152z" fill="#000"/>
<line x1="851" y1="382" x2="697" y2="472.5" stroke="#000" stroke-width="11.5"/>
<line x1="851" y1="382" x2="1006" y2="471.5" stroke="#000" stroke-width="11.5"/>
<line x1="851" y1="382" x2="851.5" y2="741" stroke="#000" stroke-width="11.5"/>
<line x1="697" y1="472.5" x2="1006" y2="471.5" stroke="#000" stroke-width="11.5"/>
<line x1="697" y1="472.5" x2="697" y2="652" stroke="#000" stroke-width="11.5"/>
<line x1="1006" y1="471.5" x2="1006.5" y2="651.5" stroke="#000" stroke-width="11.5"/>
<line x1="697" y1="472.5" x2="851.5" y2="741" stroke="#000" stroke-width="11.5"/>
<line x1="1006" y1="471.5" x2="851.5" y2="741" stroke="#000" stroke-width="11.5"/>
<line x1="697" y1="652" x2="851.5" y2="741" stroke="#000" stroke-width="11.5"/>
<line x1="1006.5" y1="651.5" x2="851.5" y2="741" stroke="#000" stroke-width="11.5"/>
<line x1="697" y1="652" x2="1006" y2="471.5" stroke="#000" stroke-width="11.5"/>
<line x1="1006.5" y1="651.5" x2="697" y2="472.5" stroke="#000" stroke-width="11.5"/>
<circle cx="851" cy="382" r="25.5" fill="#000"/>
<circle cx="697" cy="472.5" r="25.5" fill="#000"/>
<circle cx="1006" cy="471.5" r="25.5" fill="#000"/>
<circle cx="697" cy="652" r="25.5" fill="#000"/>
<circle cx="1006.5" cy="651.5" r="25.5" fill="#000"/>
<circle cx="851.5" cy="741" r="25.5" fill="#000"/>
<rect x="825.9" y="400.1" width="4.6" height="4.6" fill="#4f7cf0"/>
<rect x="801.0" y="400.8" width="4.6" height="4.6" fill="#4f7cf0"/>
<rect x="784.0" y="424.7" width="4.6" height="4.6" fill="#4f7cf0"/>
<rect x="763.4" y="436.8" width="4.6" height="4.6" fill="#4f7cf0"/>
<rect x="733.5" y="440.4" width="4.6" height="4.6" fill="#4f7cf0"/>
<rect x="877.7" y="389.5" width="4.6" height="4.6" fill="#4f7cf0"/>
<rect x="888.2" y="409.4" width="4.6" height="4.6" fill="#4f7cf0"/>
<rect x="909.9" y="408.1" width="4.6" height="4.6" fill="#4f7cf0"/>
<rect x="931.1" y="434.2" width="4.6" height="4.6" fill="#4f7cf0"/>
<rect x="950.3" y="445.3" width="4.6" height="4.6" fill="#4f7cf0"/>
<rect x="975.2" y="445.8" width="4.6" height="4.6" fill="#4f7cf0"/>
<rect x="854.7" y="409.7" width="4.6" height="4.6" fill="#4f7cf0"/>
<rect x="842.8" y="435.2" width="4.6" height="4.6" fill="#4f7cf0"/>
<rect x="842.8" y="466.6" width="4.6" height="4.6" fill="#4f7cf0"/>
<rect x="854.9" y="492.2" width="4.6" height="4.6" fill="#4f7cf0"/>
<rect x="854.9" y="520.4" width="4.6" height="4.6" fill="#4f7cf0"/>
<rect x="842.9" y="540.9" width="4.6" height="4.6" fill="#4f7cf0"/>
<rect x="855.0" y="569.0" width="4.6" height="4.6" fill="#4f7cf0"/>
<rect x="855.0" y="600.9" width="4.6" height="4.6" fill="#4f7cf0"/>
<rect x="843.0" y="627.3" width="4.6" height="4.6" fill="#4f7cf0"/>
<rect x="855.1" y="657.1" width="4.6" height="4.6" fill="#4f7cf0"/>
<rect x="855.1" y="685.9" width="4.6" height="4.6" fill="#4f7cf0"/>
<rect x="843.2" y="704.9" width="4.6" height="4.6" fill="#4f7cf0"/>
<rect x="724.7" y="464.1" width="4.6" height="4.6" fill="#4f7cf0"/>
<rect x="752.2" y="476.0" width="4.6" height="4.6" fill="#4f7cf0"/>
<rect x="775.0" y="475.9" width="4.6" height="4.6" fill="#4f7cf0"/>
<rect x="793.5" y="475.9" width="4.6" height="4.6" fill="#4f7cf0"/>
<rect x="825.3" y="475.8" width="4.6" height="4.6" fill="#4f7cf0"/>
<rect x="850.9" y="463.7" width="4.6" height="4.6" fill="#4f7cf0"/>
<rect x="880.4" y="463.6" width="4.6" height="4.6" fill="#4f7cf0"/>
<rect x="912.5" y="475.5" width="4.6" height="4.6" fill="#4f7cf0"/>
<rect x="941.9" y="475.4" width="4.6" height="4.6" fill="#4f7cf0"/>
<rect x="700.7" y="500.2" width="4.6" height="4.6" fill="#4f7cf0"/>
<rect x="688.7" y="524.5" width="4.6" height="4.6" fill="#4f7cf0"/>
<rect x="688.7" y="555.3" width="4.6" height="4.6" fill="#4f7cf0"/>
<rect x="700.7" y="580.4" width="4.6" height="4.6" fill="#4f7cf0"/>
<rect x="700.7" y="613.4" width="4.6" height="4.6" fill="#4f7cf0"/>
<rect x="1009.8" y="499.2" width="4.6" height="4.6" fill="#4f7cf0"/>
<rect x="997.8" y="518.8" width="4.6" height="4.6" fill="#4f7cf0"/>
<rect x="1009.9" y="538.9" width="4.6" height="4.6" fill="#4f7cf0"/>
<rect x="998.0" y="560.4" width="4.6" height="4.6" fill="#4f7cf0"/>
<rect x="998.0" y="593.9" width="4.6" height="4.6" fill="#4f7cf0"/>
<rect x="1010.1" y="618.8" width="4.6" height="4.6" fill="#4f7cf0"/>
<rect x="714.9" y="493.2" width="4.6" height="4.6" fill="#4f7cf0"/>
<rect x="715.8" y="519.0" width="4.6" height="4.6" fill="#4f7cf0"/>
<rect x="739.3" y="535.6" width="4.6" height="4.6" fill="#4f7cf0"/>
<rect x="751.3" y="556.6" width="4.6" height="4.6" fill="#4f7cf0"/>
<rect x="752.7" y="583.0" width="4.6" height="4.6" fill="#4f7cf0"/>
<rect x="776.7" y="600.8" width="4.6" height="4.6" fill="#4f7cf0"/>
<rect x="790.4" y="624.5" width="4.6" height="4.6" fill="#4f7cf0"/>
<rect x="796.2" y="658.6" width="4.6" height="4.6" fill="#4f7cf0"/>
<rect x="810.6" y="683.6" width="4.6" height="4.6" fill="#4f7cf0"/>
<rect x="837.4" y="706.1" width="4.6" height="4.6" fill="#4f7cf0"/>
<rect x="994.0" y="498.2" width="4.6" height="4.6" fill="#4f7cf0"/>
<rect x="977.1" y="527.6" width="4.6" height="4.6" fill="#4f7cf0"/>
<rect x="952.4" y="546.5" width="4.6" height="4.6" fill="#4f7cf0"/>
<rect x="952.6" y="570.4" width="4.6" height="4.6" fill="#4f7cf0"/>
<rect x="936.8" y="598.0" width="4.6" height="4.6" fill="#4f7cf0"/>
<rect x="909.8" y="621.0" width="4.6" height="4.6" fill="#4f7cf0"/>
<rect x="893.6" y="649.2" width="4.6" height="4.6" fill="#4f7cf0"/>
<rect x="890.5" y="678.7" width="4.6" height="4.6" fill="#4f7cf0"/>
<rect x="875.9" y="704.2" width="4.6" height="4.6" fill="#4f7cf0"/>
<rect x="723.7" y="659.5" width="4.6" height="4.6" fill="#4f7cf0"/>
<rect x="750.8" y="675.1" width="4.6" height="4.6" fill="#4f7cf0"/>
<rect x="768.4" y="699.1" width="4.6" height="4.6" fill="#4f7cf0"/>
<rect x="793.9" y="699.9" width="4.6" height="4.6" fill="#4f7cf0"/>
<rect x="804.4" y="719.8" width="4.6" height="4.6" fill="#4f7cf0"/>
<rect x="981.2" y="669.4" width="4.6" height="4.6" fill="#4f7cf0"/>
<rect x="951.9" y="686.3" width="4.6" height="4.6" fill="#4f7cf0"/>
<rect x="929.1" y="685.6" width="4.6" height="4.6" fill="#4f7cf0"/>
<rect x="908.4" y="711.4" width="4.6" height="4.6" fill="#4f7cf0"/>
<rect x="881.1" y="713.3" width="4.6" height="4.6" fill="#4f7cf0"/>
<rect x="717.6" y="629.4" width="4.6" height="4.6" fill="#4f7cf0"/>
<rect x="743.2" y="628.3" width="4.6" height="4.6" fill="#4f7cf0"/>
<rect x="769.4" y="613.0" width="4.6" height="4.6" fill="#4f7cf0"/>
<rect x="790.9" y="586.5" width="4.6" height="4.6" fill="#4f7cf0"/>
<rect x="813.2" y="587.5" width="4.6" height="4.6" fill="#4f7cf0"/>
<rect x="837.2" y="573.4" width="4.6" height="4.6" fill="#4f7cf0"/>
<rect x="847.3" y="553.6" width="4.6" height="4.6" fill="#4f7cf0"/>
<rect x="878.8" y="549.1" width="4.6" height="4.6" fill="#4f7cf0"/>
<rect x="892.9" y="527.0" width="4.6" height="4.6" fill="#4f7cf0"/>
<rect x="920.6" y="510.8" width="4.6" height="4.6" fill="#4f7cf0"/>
<rect x="955.7" y="504.2" width="4.6" height="4.6" fill="#4f7cf0"/>
<rect x="978.3" y="491.0" width="4.6" height="4.6" fill="#4f7cf0"/>
<rect x="975.2" y="639.4" width="4.6" height="4.6" fill="#4f7cf0"/>
<rect x="961.4" y="617.5" width="4.6" height="4.6" fill="#4f7cf0"/>
<rect x="938.7" y="618.3" width="4.6" height="4.6" fill="#4f7cf0"/>
<rect x="920.8" y="594.0" width="4.6" height="4.6" fill="#4f7cf0"/>
<rect x="898.8" y="595.2" width="4.6" height="4.6" fill="#4f7cf0"/>
<rect x="886.5" y="574.2" width="4.6" height="4.6" fill="#4f7cf0"/>
<rect x="865.3" y="561.9" width="4.6" height="4.6" fill="#4f7cf0"/>
<rect x="835.2" y="558.4" width="4.6" height="4.6" fill="#4f7cf0"/>
<rect x="823.5" y="537.7" width="4.6" height="4.6" fill="#4f7cf0"/>
<rect x="801.3" y="538.8" width="4.6" height="4.6" fill="#4f7cf0"/>
<rect x="773.7" y="522.8" width="4.6" height="4.6" fill="#4f7cf0"/>
<rect x="759.8" y="500.9" width="4.6" height="4.6" fill="#4f7cf0"/>
<rect x="724.9" y="494.6" width="4.6" height="4.6" fill="#4f7cf0"/>
<rect x="874.2" y="378.6" width="4.6" height="4.6" fill="#4f7cf0"/>
<rect x="868.5" y="395.8" width="4.6" height="4.6" fill="#4f7cf0"/>
<rect x="853.0" y="404.8" width="4.6" height="4.6" fill="#4f7cf0"/>
<rect x="834.9" y="401.1" width="4.6" height="4.6" fill="#4f7cf0"/>
<rect x="824.5" y="387.6" width="4.6" height="4.6" fill="#4f7cf0"/>
<rect x="824.9" y="370.5" width="4.6" height="4.6" fill="#4f7cf0"/>
<rect x="836.9" y="357.1" width="4.6" height="4.6" fill="#4f7cf0"/>
<rect x="856.9" y="355.6" width="4.6" height="4.6" fill="#4f7cf0"/>
<rect x="868.3" y="363.4" width="4.6" height="4.6" fill="#4f7cf0"/>
<rect x="720.2" y="469.6" width="4.6" height="4.6" fill="#4f7cf0"/>
<rect x="712.9" y="488.0" width="4.6" height="4.6" fill="#4f7cf0"/>
<rect x="701.4" y="494.8" width="4.6" height="4.6" fill="#4f7cf0"/>
<rect x="683.5" y="493.1" width="4.6" height="4.6" fill="#4f7cf0"/>
<rect x="669.6" y="474.8" width="4.6" height="4.6" fill="#4f7cf0"/>
<rect x="670.8" y="461.3" width="4.6" height="4.6" fill="#4f7cf0"/>
<rect x="682.3" y="447.9" width="4.6" height="4.6" fill="#4f7cf0"/>
<rect x="694.8" y="444.7" width="4.6" height="4.6" fill="#4f7cf0"/>
<rect x="713.7" y="453.2" width="4.6" height="4.6" fill="#4f7cf0"/>
<rect x="1029.2" y="469.9" width="4.6" height="4.6" fill="#4f7cf0"/>
<rect x="1025.7" y="482.1" width="4.6" height="4.6" fill="#4f7cf0"/>
<rect x="1007.1" y="494.5" width="4.6" height="4.6" fill="#4f7cf0"/>
<rect x="989.9" y="490.7" width="4.6" height="4.6" fill="#4f7cf0"/>
<rect x="981.4" y="481.5" width="4.6" height="4.6" fill="#4f7cf0"/>
<rect x="980.1" y="459.4" width="4.6" height="4.6" fill="#4f7cf0"/>
<rect x="990.7" y="447.3" width="4.6" height="4.6" fill="#4f7cf0"/>
<rect x="1009.7" y="444.4" width="4.6" height="4.6" fill="#4f7cf0"/>
<rect x="1022.4" y="451.8" width="4.6" height="4.6" fill="#4f7cf0"/>
<rect x="720.1" y="651.5" width="4.6" height="4.6" fill="#4f7cf0"/>
<rect x="712.8" y="667.7" width="4.6" height="4.6" fill="#4f7cf0"/>
<rect x="703.2" y="673.7" width="4.6" height="4.6" fill="#4f7cf0"/>
<rect x="685.5" y="673.5" width="4.6" height="4.6" fill="#4f7cf0"/>
<rect x="670.2" y="656.9" width="4.6" height="4.6" fill="#4f7cf0"/>
<rect x="672.5" y="637.2" width="4.6" height="4.6" fill="#4f7cf0"/>
<rect x="680.1" y="628.8" width="4.6" height="4.6" fill="#4f7cf0"/>
<rect x="698.7" y="624.5" width="4.6" height="4.6" fill="#4f7cf0"/>
<rect x="714.8" y="633.9" width="4.6" height="4.6" fill="#4f7cf0"/>
<rect x="1029.6" y="647.6" width="4.6" height="4.6" fill="#4f7cf0"/>
<rect x="1024.5" y="664.6" width="4.6" height="4.6" fill="#4f7cf0"/>
<rect x="1010.3" y="674.0" width="4.6" height="4.6" fill="#4f7cf0"/>
<rect x="992.5" y="671.8" width="4.6" height="4.6" fill="#4f7cf0"/>
<rect x="980.0" y="657.1" width="4.6" height="4.6" fill="#4f7cf0"/>
<rect x="979.7" y="642.2" width="4.6" height="4.6" fill="#4f7cf0"/>
<rect x="990.5" y="627.7" width="4.6" height="4.6" fill="#4f7cf0"/>
<rect x="1011.0" y="624.6" width="4.6" height="4.6" fill="#4f7cf0"/>
<rect x="1020.8" y="629.8" width="4.6" height="4.6" fill="#4f7cf0"/>
<rect x="874.7" y="739.3" width="4.6" height="4.6" fill="#4f7cf0"/>
<rect x="867.3" y="756.6" width="4.6" height="4.6" fill="#4f7cf0"/>
<rect x="855.3" y="763.5" width="4.6" height="4.6" fill="#4f7cf0"/>
<rect x="838.6" y="761.9" width="4.6" height="4.6" fill="#4f7cf0"/>
<rect x="824.4" y="744.8" width="4.6" height="4.6" fill="#4f7cf0"/>
<rect x="824.5" y="732.2" width="4.6" height="4.6" fill="#4f7cf0"/>
<rect x="834.1" y="718.1" width="4.6" height="4.6" fill="#4f7cf0"/>
<rect x="853.1" y="713.5" width="4.6" height="4.6" fill="#4f7cf0"/>
<rect x="869.8" y="723.7" width="4.6" height="4.6" fill="#4f7cf0"/>
<circle cx="717" cy="441" r="3.5" fill="none" stroke="#7c95d8" stroke-width="1"/><circle cx="717" cy="441" r="1.2" fill="#4f7cf0"/>
<circle cx="887" cy="385" r="3.5" fill="none" stroke="#7c95d8" stroke-width="1"/><circle cx="887" cy="385" r="1.2" fill="#4f7cf0"/>
<circle cx="986" cy="440" r="3.5" fill="none" stroke="#7c95d8" stroke-width="1"/><circle cx="986" cy="440" r="1.2" fill="#4f7cf0"/>
<circle cx="835" cy="458" r="3.5" fill="none" stroke="#7c95d8" stroke-width="1"/><circle cx="835" cy="458" r="1.2" fill="#4f7cf0"/>
<circle cx="868" cy="458" r="3.5" fill="none" stroke="#7c95d8" stroke-width="1"/><circle cx="868" cy="458" r="1.2" fill="#4f7cf0"/>
<circle cx="835" cy="489" r="3.5" fill="none" stroke="#7c95d8" stroke-width="1"/><circle cx="835" cy="489" r="1.2" fill="#4f7cf0"/>
<circle cx="868" cy="489" r="3.5" fill="none" stroke="#7c95d8" stroke-width="1"/><circle cx="868" cy="489" r="1.2" fill="#4f7cf0"/>
<circle cx="680" cy="505" r="3.5" fill="none" stroke="#7c95d8" stroke-width="1"/><circle cx="680" cy="505" r="1.2" fill="#4f7cf0"/>
<circle cx="1020" cy="503" r="3.5" fill="none" stroke="#7c95d8" stroke-width="1"/><circle cx="1020" cy="503" r="1.2" fill="#4f7cf0"/>
<circle cx="783" cy="570" r="3.5" fill="none" stroke="#7c95d8" stroke-width="1"/><circle cx="783" cy="570" r="1.2" fill="#4f7cf0"/>
<circle cx="820" cy="563" r="3.5" fill="none" stroke="#7c95d8" stroke-width="1"/><circle cx="820" cy="563" r="1.2" fill="#4f7cf0"/>
<circle cx="880" cy="563" r="3.5" fill="none" stroke="#7c95d8" stroke-width="1"/><circle cx="880" cy="563" r="1.2" fill="#4f7cf0"/>
<circle cx="918" cy="570" r="3.5" fill="none" stroke="#7c95d8" stroke-width="1"/><circle cx="918" cy="570" r="1.2" fill="#4f7cf0"/>
<circle cx="750" cy="603" r="3.5" fill="none" stroke="#7c95d8" stroke-width="1"/><circle cx="750" cy="603" r="1.2" fill="#4f7cf0"/>
<circle cx="680" cy="619" r="3.5" fill="none" stroke="#7c95d8" stroke-width="1"/><circle cx="680" cy="619" r="1.2" fill="#4f7cf0"/>
<circle cx="716" cy="619" r="3.5" fill="none" stroke="#7c95d8" stroke-width="1"/><circle cx="716" cy="619" r="1.2" fill="#4f7cf0"/>
<circle cx="734" cy="651" r="3.5" fill="none" stroke="#7c95d8" stroke-width="1"/><circle cx="734" cy="651" r="1.2" fill="#4f7cf0"/>
<circle cx="969" cy="651" r="3.5" fill="none" stroke="#7c95d8" stroke-width="1"/><circle cx="969" cy="651" r="1.2" fill="#4f7cf0"/>
<circle cx="713" cy="686" r="3.5" fill="none" stroke="#7c95d8" stroke-width="1"/><circle cx="713" cy="686" r="1.2" fill="#4f7cf0"/>
<circle cx="990" cy="619" r="3.5" fill="none" stroke="#7c95d8" stroke-width="1"/><circle cx="990" cy="619" r="1.2" fill="#4f7cf0"/>
<circle cx="1024" cy="619" r="3.5" fill="none" stroke="#7c95d8" stroke-width="1"/><circle cx="1024" cy="619" r="1.2" fill="#4f7cf0"/>
<circle cx="987" cy="683" r="3.5" fill="none" stroke="#7c95d8" stroke-width="1"/><circle cx="987" cy="683" r="1.2" fill="#4f7cf0"/>
<circle cx="812" cy="738" r="3.5" fill="none" stroke="#7c95d8" stroke-width="1"/><circle cx="812" cy="738" r="1.2" fill="#4f7cf0"/>
<circle cx="887" cy="738" r="3.5" fill="none" stroke="#7c95d8" stroke-width="1"/><circle cx="887" cy="738" r="1.2" fill="#4f7cf0"/>
<circle cx="601" cy="649" r="3.5" fill="none" stroke="#7c95d8" stroke-width="1"/><circle cx="601" cy="649" r="1.2" fill="#4f7cf0"/>
<circle cx="800" cy="612" r="3.5" fill="none" stroke="#7c95d8" stroke-width="1"/><circle cx="800" cy="612" r="1.2" fill="#4f7cf0"/>
<circle cx="960" cy="604" r="3.5" fill="none" stroke="#7c95d8" stroke-width="1"/><circle cx="960" cy="604" r="1.2" fill="#4f7cf0"/>
<circle cx="852" cy="371" r="3" fill="#000" stroke="#fff" stroke-width="1.3"/>
<circle cx="862" cy="381" r="3" fill="#000" stroke="#fff" stroke-width="1.3"/>
<circle cx="696" cy="472" r="3" fill="#000" stroke="#fff" stroke-width="1.3"/>
<circle cx="1004" cy="464" r="3" fill="#000" stroke="#fff" stroke-width="1.3"/>
<circle cx="696" cy="653" r="3" fill="#000" stroke="#fff" stroke-width="1.3"/>
<circle cx="862" cy="759" r="3" fill="#000" stroke="#fff" stroke-width="1.3"/>
<path d="M958 438 L958 454 L962 450 L966 457 L968 456 L965 449 L970 449Z" fill="#222" stroke="#eee" stroke-width="0.8"/></svg>
<div class="a" style="left:731px;top:312px;width:242px;height:31px;background:#535353;border-radius:3px;border:1px solid #4a4a4a"></div>
<div class="a" style="left:749px;top:316px;width:73px;height:24px;border:1px solid #676767;border-radius:2px"></div>
<div class="a" style="left:825px;top:316px;width:63px;height:24px;border:1px solid #676767;border-radius:2px"></div>
<svg style="left:0;top:0" width="1918" height="1017"><path d="M737.5 320 v16" stroke="#444" stroke-width="2" stroke-dasharray="1 1"/>
<rect x="753.5" y="322.5" width="11" height="11" rx="1.5" fill="none" stroke="#c6c6c6" stroke-width="1.3"/><path d="M757 326 l4 2.5 l-4 2.5z" fill="#c6c6c6"/><path d="M765 320 l1 2 l2 1 l-2 1 l-1 2 l-1-2 l-2-1 l2-1z" fill="#c6c6c6"/>
<rect x="896.5" y="322.5" width="8" height="8" fill="none" stroke="#c6c6c6" stroke-width="1.2"/><rect x="900" y="326" width="8.5" height="8.5" fill="#c6c6c6"/><path d="M902 330 h5 M904.5 327.5 v5" stroke="#535353" stroke-width="1"/>
<rect x="922" y="327" width="12" height="9" rx="1" fill="#c6c6c6"/><path d="M924.5 327 v-3 a3.5 3.5 0 0 1 7 0 v3" fill="none" stroke="#c6c6c6" stroke-width="1.6"/>
<circle cx="949.5" cy="328" r="1.6" fill="#c6c6c6"/><circle cx="955" cy="328" r="1.6" fill="#c6c6c6"/><circle cx="960.5" cy="328" r="1.6" fill="#c6c6c6"/></svg>
<div class="t" style="left:776.00px;top:322.24px;font-size:11px;color:#dcdcdc;font-weight:normal;font-family:'Liberation Sans';transform:scaleX(0.8969);transform-origin:0 0;">Recolor</div>
<div class="t" style="left:836.00px;top:322.24px;font-size:11px;color:#dcdcdc;font-weight:normal;font-family:'Liberation Sans';transform:scaleX(0.9478);transform-origin:0 0;">Ungroup</div>
<div class="a" style="left:1316px;top:311px;width:14px;height:519px;background:#484848"></div>
<div class="a" style="left:1318px;top:555px;width:11px;height:21px;border-radius:5px;background:#5c5c5c"></div>
<div class="a" style="left:389px;top:820px;width:941px;height:10px;background:#3c3c3c"></div>
<div class="a" style="left:1056px;top:821px;width:22px;height:9px;border-radius:4px;background:#4e4e4e"></div>
<div class="a" style="left:1330px;top:286px;width:3px;height:544px;background:#3b3b3b"></div>
<div class="a" style="left:1333px;top:286px;width:238px;height:10px;background:#464646"></div>
<div class="a" style="left:1333px;top:296px;width:32px;height:534px;background:#4b4b4b"></div>
<div class="a" style="left:1365px;top:296px;width:3px;height:534px;background:#3e3e3e"></div>
<div class="a" style="left:1333px;top:356px;width:32px;height:2px;background:#3e3e3e"></div>
<div class="a" style="left:1333px;top:441px;width:32px;height:2px;background:#3e3e3e"></div>
<div class="a" style="left:1333px;top:525px;width:32px;height:2px;background:#3e3e3e"></div>
<div class="a" style="left:1333px;top:585px;width:32px;height:2px;background:#3e3e3e"></div>
<div class="a" style="left:1333px;top:620px;width:32px;height:2px;background:#3e3e3e"></div>
<div class="a" style="left:1333px;top:680px;width:32px;height:2px;background:#3e3e3e"></div>
<div class="a" style="left:1333px;top:716px;width:32px;height:2px;background:#3e3e3e"></div>
<div class="a" style="left:1343px;top:334px;width:14px;height:15px;background:linear-gradient(135deg,#222 10%,#ddd);clip-path:path('M0 0 Q14 2 14 15 H0Z')"></div>
<div class="a" style="left:1343px;top:481px;width:14px;height:10px;border:1px solid #c6c6c6;background:linear-gradient(90deg,#222,#ddd)"></div>
<div class="a" style="left:1338px;top:632px;width:23px;height:19px;background:#363636;border-radius:2px"></div>
<div class="a" style="left:1368px;top:296px;width:200px;height:24px;background:#474747"></div>
<div class="a" style="left:1430px;top:297px;width:40px;height:23px;background:#535353"></div>
<div class="a" style="left:1568px;top:228px;width:3px;height:602px;background:#3f3f3f"></div>
<div class="a" style="left:1373px;top:325px;width:190px;height:488px;border:1px solid #585858"></div>
<div class="a" style="left:1378px;top:330px;width:160px;height:19px;background:#464646;border-radius:2px"></div>
<div class="a" style="left:1373px;top:358px;width:190px;height:18px;background:#4a6283"></div>
<div class="a" style="left:1410px;top:359px;width:2px;height:15px;background:#4a8cff"></div>
<div class="a" style="left:1436px;top:358px;width:16px;height:16px;background:#f1e6e6;border:1px solid #222;border-radius:2px"></div>
<svg style="left:0;top:0" width="1918" height="1017"><path d="M1320 322 l3-3 l3 3" fill="none" stroke="#aaa" stroke-width="1"/>
<path d="M1320 807 l3 3 l3-3" fill="none" stroke="#aaa" stroke-width="1"/>
<path d="M440.5 823.25 L443 825.75 L445.5 823.25" fill="none" stroke="#bbb" stroke-width="1.2"/>
<path d="M452.5 820 v10" stroke="#333" stroke-width="1"/>
<path d="M504.5 823.25 L507 825.75 L509.5 823.25" fill="none" stroke="#bbb" stroke-width="1.2"/>
<path d="M522 821 v7 M526 821 l-3 3.5 l3 3.5 M541 821 l-4 3.5 l4 3.5" fill="none" stroke="#666" stroke-width="1"/>
<path d="M590.5 823.25 L593 825.75 L595.5 823.25" fill="none" stroke="#bbb" stroke-width="1.2"/>
<path d="M609 821 l4 3.5 l-4 3.5 M624 821 l3 3.5 l-3 3.5 M628 821 v7" fill="none" stroke="#666" stroke-width="1"/>
<path d="M820 821 l4 3.5 l-4 3.5z" fill="#bbb"/><path d="M838 821 l-3 3.5 l3 3.5" fill="none" stroke="#888" stroke-width="1"/>
<path d="M1307 821 l3 3.5 l-3 3.5" fill="none" stroke="#888" stroke-width="1"/>
<path d="M1356 288.5 l-2.5 2.5 l2.5 2.5 M1360 288.5 l-2.5 2.5 l2.5 2.5" fill="none" stroke="#bbb" stroke-width="1"/>
<path d="M1558 288.5 l2.5 2.5 l-2.5 2.5 M1562 288.5 l2.5 2.5 l-2.5 2.5" fill="none" stroke="#bbb" stroke-width="1"/>
<path d="M1342 300.5 h14" stroke="#404040" stroke-width="1.5" stroke-dasharray="1 1"/>
<path d="M1342 360.5 h14" stroke="#404040" stroke-width="1.5" stroke-dasharray="1 1"/>
<path d="M1342 445.5 h14" stroke="#404040" stroke-width="1.5" stroke-dasharray="1 1"/>
<path d="M1342 529.5 h14" stroke="#404040" stroke-width="1.5" stroke-dasharray="1 1"/>
<path d="M1342 589.5 h14" stroke="#404040" stroke-width="1.5" stroke-dasharray="1 1"/>
<path d="M1342 624.5 h14" stroke="#404040" stroke-width="1.5" stroke-dasharray="1 1"/>
<path d="M1342 684.5 h14" stroke="#404040" stroke-width="1.5" stroke-dasharray="1 1"/>
<path d="M1342 320 q-1-8 8-8 q10 0 10 6 q0 2-3 2 q-2 0-2 2 q0 3-5 3 q-8 0-8-5z" fill="#c6c6c6"/><circle cx="1346" cy="319" r="1.2" fill="#4b4b4b"/><circle cx="1350" cy="316" r="1.2" fill="#4b4b4b"/><circle cx="1354" cy="316" r="1.2" fill="#4b4b4b"/><circle cx="1349" cy="321" r="1.2" fill="#4b4b4b"/>
<rect x="1343" y="371" width="14" height="10" fill="#c6c6c6"/><path d="M1347.5 371 v10 M1352.5 371 v10 M1343 376 h14" stroke="#7a7a7a" stroke-width="1"/>
<path d="M1345 399 h10 v7 h-10z" fill="#c6c6c6"/><path d="M1347 399 l-2-6 M1350 399 v-8 M1353 399 l3-5" stroke="#c6c6c6" stroke-width="1.6"/>
<circle cx="1350" cy="421" r="3" fill="#c6c6c6"/><circle cx="1346.5" cy="426" r="3" fill="#c6c6c6"/><circle cx="1353.5" cy="426" r="3" fill="#c6c6c6"/><path d="M1350 424 l-2 8 h4z" fill="#c6c6c6"/>
<path d="M1343 456.5 h14 M1343 461 h14 M1343 465.5 h14" stroke="#c6c6c6" stroke-width="1.6"/>
<circle cx="1348" cy="509" r="4.5" fill="#c6c6c6"/><circle cx="1352" cy="513" r="4.5" fill="#8a8a8a" stroke="#c6c6c6" stroke-width="0.8"/>
<circle cx="1350" cy="546" r="5" fill="#c6c6c6"/><circle cx="1350" cy="546" r="6.5" fill="none" stroke="#c6c6c6" stroke-width="0.8" stroke-dasharray="1 1"/>
<rect x="1347.5" y="565.5" width="10" height="10" fill="none" stroke="#c6c6c6" stroke-width="1.1"/><rect x="1343.5" y="571.5" width="6" height="6" fill="#4b4b4b" stroke="#c6c6c6" stroke-width="1"/>
<circle cx="1350" cy="606" r="6" fill="#c6c6c6"/><path d="M1344 603 a7 7 0 0 1 12 0 M1356 609 a7 7 0 0 1 -12 0" fill="none" stroke="#c6c6c6" stroke-width="1"/>
<rect x="1344" y="636" width="7" height="7" fill="none" stroke="#c6c6c6" stroke-width="1.3"/><rect x="1348" y="640" width="7" height="7" fill="#c6c6c6"/>
<path d="M1343.5 657 v16" stroke="#c6c6c6" stroke-width="1"/><rect x="1345" y="659" width="7" height="4" fill="#c6c6c6"/><rect x="1345" y="666" width="11" height="4" fill="#c6c6c6"/>
<rect x="1344.5" y="696.5" width="11" height="11" fill="none" stroke="#c6c6c6" stroke-width="1.1" stroke-dasharray="2 2"/><circle cx="1350" cy="702" r="1" fill="#c6c6c6"/>
<path d="M1402.5 298 v21" stroke="#404040" stroke-width="1"/>
<path d="M1470.5 298 v21" stroke="#404040" stroke-width="1"/>
<path d="M1502.5 298 v21" stroke="#404040" stroke-width="1"/>
<path d="M1535.5 298 v21" stroke="#404040" stroke-width="1"/>
<path d="M1553 305.5 h10 M1553 309 h10 M1553 312.5 h10" stroke="#bdbdbd" stroke-width="1.2"/>
<circle cx="1387.5" cy="338.5" r="3.3" fill="none" stroke="#cfcfcf" stroke-width="1.3"/><path d="M1390 341 l3 3" stroke="#cfcfcf" stroke-width="1.5"/>
<path d="M1547 333 h12 l-4.5 5.5 v7 l-3 -2 v-5z" fill="#cfcfcf"/>
<path d="M1376 366.5 q5.5-5 11 0 q-5.5 5 -11 0z" fill="none" stroke="#e0e6ee" stroke-width="1.1"/><circle cx="1381.5" cy="366.5" r="1.8" fill="#e0e6ee"/>
<path d="M1421 363 l3 3.5 l-3 3.5" fill="none" stroke="#eee" stroke-width="1.1"/>
<path d="M1439 366 h10" stroke="#6a2a2a" stroke-width="1.5" stroke-dasharray="1.5 1"/>
<circle cx="1541" cy="366.5" r="3.5" fill="none" stroke="#ccd" stroke-width="1"/><rect x="1549.5" y="363.5" width="6" height="6" fill="#2a3eb0" stroke="#bcd" stroke-width="1"/><path d="M1556 357 h6 v6z" fill="#eee"/>
<rect x="1420.5" y="817" width="9" height="9" fill="none" stroke="#999" stroke-width="1"/>
<rect x="1444.5" y="817" width="9" height="9" fill="none" stroke="#999" stroke-width="1"/>
<rect x="1466.5" y="817" width="9" height="9" fill="none" stroke="#999" stroke-width="1"/>
<rect x="1489.5" y="817" width="9" height="9" fill="none" stroke="#999" stroke-width="1"/>
<rect x="1512.5" y="817" width="9" height="9" fill="none" stroke="#999" stroke-width="1"/></svg>
<div class="t" style="left:394.00px;top:820.56px;font-size:9px;color:#bbbbbb;font-weight:normal;font-family:'Liberation Sans';transform:scaleX(0.9552);transform-origin:0 0;">800%</div>
<div class="t" style="left:457.00px;top:820.56px;font-size:9px;color:#bbbbbb;font-weight:normal;font-family:'Liberation Sans';">0°</div>
<div class="t" style="left:554.00px;top:820.56px;font-size:9px;color:#bbbbbb;font-weight:normal;font-family:'Liberation Sans';">1</div>
<div class="t" style="left:695.00px;top:820.56px;font-size:9px;color:#9a9a9a;font-weight:normal;font-family:'Liberation Sans';transform:scaleX(0.9678);transform-origin:0 0;">Direct Selection</div>
<div class="t" style="left:1376.00px;top:302.90px;font-size:10px;color:#bdbdbd;font-weight:bold;font-family:'Liberation Sans';transform:scaleX(0.7762);transform-origin:0 0;">Prope</div>
<div class="t" style="left:1407.00px;top:302.90px;font-size:10px;color:#bdbdbd;font-weight:bold;font-family:'Liberation Sans';transform:scaleX(0.8078);transform-origin:0 0;">Librai</div>
<div class="t" style="left:1437.00px;top:302.90px;font-size:10px;color:#f2f2f2;font-weight:bold;font-family:'Liberation Sans';transform:scaleX(0.8062);transform-origin:0 0;">Layers</div>
<div class="t" style="left:1478.00px;top:302.90px;font-size:10px;color:#bdbdbd;font-weight:bold;font-family:'Liberation Sans';transform:scaleX(0.8073);transform-origin:0 0;">Asset</div>
<div class="t" style="left:1508.00px;top:302.90px;font-size:10px;color:#bdbdbd;font-weight:bold;font-family:'Liberation Sans';transform:scaleX(0.9373);transform-origin:0 0;">Artbo</div>
<div class="t" style="left:1401.00px;top:334.40px;font-size:10px;color:#626262;font-weight:normal;font-family:'Liberation Sans';transform:scaleX(0.9993);transform-origin:0 0;">Search All</div>
<div class="t" style="left:1456.00px;top:360.90px;font-size:10px;color:#e8ecf2;font-weight:normal;font-family:'Liberation Sans';transform:scaleX(0.8393);transform-origin:0 0;">Layer 1</div>
<div class="t" style="left:1373.00px;top:816.56px;font-size:9px;color:#aaaaaa;font-weight:normal;font-family:'Liberation Sans';transform:scaleX(0.8991);transform-origin:0 0;">1 Layer</div>
<div class="a" style="left:1130px;top:619px;width:201px;height:123px;background:#4f4f4f;border:1px solid #3c3c3c"></div>
<div class="a" style="left:1131px;top:620px;width:199px;height:25px;background:#444"></div>
<div class="a" style="left:1131px;top:620px;width:59px;height:25px;background:#505050"></div>
<div class="a" style="left:1190px;top:620px;width:37px;height:25px;background:#4a4a4a"></div>
<div class="a" style="left:1265px;top:671px;width:62px;height:18px;background:#535353;border-radius:2px"></div>
<svg style="left:0;top:0" width="1918" height="1017"><path d="M1296 630 l3 3 l-3 3 M1300 630 l3 3 l-3 3" fill="none" stroke="#ccc" stroke-width="1"/><path d="M1311.5 628 v10" stroke="#aaa" stroke-width="1"/><path d="M1317 629.5 h9 M1317 633 h9 M1317 636.5 h9" stroke="#ccc" stroke-width="1.1"/>
<rect x="1141" y="674" width="8" height="8" fill="#c6c6c6"/><rect x="1144" y="677" width="8" height="8" fill="#c6c6c6"/>
<rect x="1173" y="674" width="8" height="8" fill="#c6c6c6"/><rect x="1176" y="677" width="8" height="8" fill="#4f4f4f" stroke="#c6c6c6" stroke-width="1"/>
<rect x="1205" y="674" width="8" height="8" fill="none" stroke="#c6c6c6" stroke-width="1"/><rect x="1208" y="677" width="8" height="8" fill="none" stroke="#c6c6c6" stroke-width="1"/><rect x="1208" y="677" width="5" height="5" fill="#c6c6c6"/>
<rect x="1237" y="674" width="8" height="8" fill="#c6c6c6"/><rect x="1240" y="677" width="8" height="8" fill="#c6c6c6"/><rect x="1240" y="677" width="5" height="5" fill="#4f4f4f"/>
<rect x="1143" y="719" width="8" height="8" fill="none" stroke="#c6c6c6" stroke-width="1.1"/><rect x="1146" y="722" width="8" height="8" fill="none" stroke="#c6c6c6" stroke-width="1.1"/>
<rect x="1175" y="719" width="8" height="8" fill="#c6c6c6"/><rect x="1178" y="722" width="8" height="8" fill="#c6c6c6" stroke="#4f4f4f" stroke-width="0.8"/>
<rect x="1207" y="719" width="8" height="8" fill="#c6c6c6"/><rect x="1210" y="722" width="8" height="8" fill="#c6c6c6" stroke="#4f4f4f" stroke-width="0.8"/>
<rect x="1240" y="719" width="11" height="11" fill="none" stroke="#999" stroke-width="1"/><rect x="1243" y="722" width="5" height="5" fill="#c6c6c6"/>
<rect x="1273" y="719" width="8" height="8" fill="none" stroke="#c6c6c6" stroke-width="1.1"/><rect x="1276" y="722" width="8" height="8" fill="none" stroke="#c6c6c6" stroke-width="1.1"/>
<rect x="1306" y="719" width="8" height="8" fill="none" stroke="#c6c6c6" stroke-width="1.1"/><rect x="1309" y="722" width="8" height="8" fill="#c6c6c6"/></svg>
<div class="t" style="left:1139.00px;top:628.90px;font-size:10px;color:#f0f0f0;font-weight:bold;font-family:'Liberation Sans';transform:scaleX(0.8796);transform-origin:0 0;">Pathfinder</div>
<div class="t" style="left:1198.00px;top:628.90px;font-size:10px;color:#bdbdbd;font-weight:bold;font-family:'Liberation Sans';transform:scaleX(0.8800);transform-origin:0 0;">Align</div>
<div class="t" style="left:1135.00px;top:653.48px;font-size:9.5px;color:#c0c0c0;font-weight:normal;font-family:'Liberation Sans';transform:scaleX(0.8814);transform-origin:0 0;">Shape Modes:</div>
<div class="t" style="left:1281.00px;top:676.48px;font-size:9.5px;color:#6e6e6e;font-weight:normal;font-family:'Liberation Sans';transform:scaleX(0.9307);transform-origin:0 0;">Expand</div>
<div class="t" style="left:1135.00px;top:698.48px;font-size:9.5px;color:#c0c0c0;font-weight:normal;font-family:'Liberation Sans';transform:scaleX(0.9072);transform-origin:0 0;">Pathfinders:</div>
</div>
<div class="a" style="left:0;top:585px;width:1900px;height:295px;background:linear-gradient(180deg,rgba(0,0,0,0) 0px,rgba(0,0,0,0.07) 65px,rgba(0,0,0,0.14) 115px,rgba(0,0,0,0.27) 231px,rgba(0,0,0,0.4) 295px)"></div>
<div class="a" style="left:15px;top:816px;width:1868px;height:4px;background:rgba(255,255,255,0.22)"></div>
<div class="a" style="left:1400px;top:816px;width:22px;height:4px;background:rgba(255,255,255,0.45)"></div>
<div class="a" style="left:15px;top:816px;width:1386px;height:4px;background:linear-gradient(90deg,#ff0033 82%,#ff2791 100%)"></div>
<svg style="left:0;top:0" width="1918" height="1017"><path d="M35.5 838.5 L54.5 850 L35.5 861.5Z" fill="#eeeeee"/>
<path d="M93 840 L108 850 L93 860Z" fill="#eeeeee"/><rect x="109.5" y="840" width="3.5" height="20" fill="#eeeeee"/>
<path d="M150 845 h5 l7-6 v22 l-7-6 h-5z" fill="#eeeeee"/><path d="M164.5 845.5 a5 5 0 0 1 0 9" fill="none" stroke="#eee" stroke-width="2.2"/><path d="M164.5 840 a10.5 10.5 0 0 1 0 20" fill="none" stroke="#eee" stroke-width="2"/>
<rect x="1599.5" y="839" width="28" height="21.5" rx="3.5" fill="#eeeeee"/>
<path d="M1610.5 846 h-5 v8 h5 M1620.5 846 h-5 v8 h5" fill="none" stroke="#000" stroke-width="2.6"/>
<path d="M1684.78 847.71 L1684.78 852.29 L1682.24 852.22 L1681.10 854.96 L1682.95 856.71 L1679.71 859.95 L1677.96 858.10 L1675.22 859.24 L1675.29 861.78 L1670.71 861.78 L1670.78 859.24 L1668.04 858.10 L1666.29 859.95 L1663.05 856.71 L1664.90 854.96 L1663.76 852.22 L1661.22 852.29 L1661.22 847.71 L1663.76 847.78 L1664.90 845.04 L1663.05 843.29 L1666.29 840.05 L1668.04 841.90 L1670.78 840.76 L1670.71 838.22 L1675.29 838.22 L1675.22 840.76 L1677.96 841.90 L1679.71 840.05 L1682.95 843.29 L1681.10 845.04 L1682.24 847.78Z" fill="#eeeeee"/><circle cx="1673" cy="850" r="4" fill="#000"/>
<rect x="1719.5" y="838.5" width="29" height="23" rx="2.5" fill="none" stroke="#eeeeee" stroke-width="2.2"/><rect x="1732" y="848" width="12" height="9" fill="#eeeeee"/>
<rect x="1782" y="843.5" width="23" height="13.5" fill="none" stroke="#eeeeee" stroke-width="2.2"/>
<path d="M1842 845 v-6.5 h6.5 M1858.5 838.5 h6.5 v6.5 M1865 855 v6.5 h-6.5 M1848.5 861.5 h-6.5 v-6.5" fill="none" stroke="#eeeeee" stroke-width="2.4"/></svg>
<div class="t" style="left:199.00px;top:840.36px;font-size:16.5px;color:#eeeeee;font-weight:normal;font-family:'Liberation Sans';transform:scaleX(0.9861);transform-origin:0 0;">27:29 / 37:03</div>
<div class="a" style="left:0;top:880px;width:1900px;height:137px;background:#0f0f0f"></div>
<div class="a" style="left:30px;top:930px;width:88px;height:22px;border-radius:4px;background:#272727"></div>
<div class="a" style="left:31.5px;top:963px;width:49px;height:49px;border-radius:25px;background:radial-gradient(circle at 35% 50%,#1c1c1c 40%,#3a3a3a 100%)"></div>
<div class="a" style="left:238px;top:966px;width:118px;height:45px;border-radius:22.5px;background:#f1f1f1"></div>
<div class="a" style="left:666px;top:966px;width:167px;height:45px;border-radius:22.5px;background:#272727"></div>
<div class="a" style="left:843px;top:966px;width:115px;height:45px;border-radius:22.5px;background:#272727"></div>
<div class="a" style="left:968px;top:966px;width:148px;height:45px;border-radius:22.5px;background:#272727"></div>
<div class="a" style="left:1126px;top:966px;width:45px;height:45px;border-radius:22.5px;background:#272727"></div>
<div class="a" style="left:1200.6px;top:920px;width:51.40000000000009px;height:40px;border-radius:8px;background:#f1f1f1"></div>
<div class="a" style="left:1261.8px;top:920px;width:88.0px;height:40px;border-radius:8px;background:#272727"></div>
<div class="a" style="left:1360px;top:920px;width:174px;height:40px;border-radius:8px;background:#272727"></div>
<div class="a" style="left:1544px;top:920px;width:99px;height:40px;border-radius:8px;background:#272727"></div>
<div class="a" style="left:1201px;top:983px;width:210px;height:40px;border-radius:8px;overflow:hidden;background:linear-gradient(90deg,#3a2c20 0%,#4a3828 14%,#3f3022 15%,#3a2c20 40%,#4a3a2a 65%,#5a4834 75%,#5e4c38 86%,#6a583f 100%)"><div style="position:absolute;left:29px;top:0;width:1px;height:40px;background:#2e2218"></div><div style="position:absolute;left:68px;top:0;width:1px;height:40px;background:#35281c"></div><div style="position:absolute;left:151px;top:0;width:1px;height:40px;background:#3a2c20"></div><div style="position:absolute;left:190px;top:0;width:20px;height:40px;background:linear-gradient(90deg,#6a583f,#5a4a35)"></div><div style="position:absolute;left:126px;top:17px;width:25px;height:30px;background:#0d0b09"></div><div style="position:absolute;left:66px;top:1px;width:64px;height:70px;border-radius:32px;background:#1c1612"></div><div style="position:absolute;left:80px;top:14px;width:36px;height:50px;border-radius:18px;background:#d5b49c"></div><div style="position:absolute;left:76px;top:4px;width:26px;height:26px;border-radius:13px;background:#1c1612"></div><div style="position:absolute;left:98px;top:6px;width:22px;height:18px;border-radius:11px;background:#241c16"></div></div>
<svg style="left:0;top:0" width="1918" height="1017"><path d="M42 937.5 h-2.5 a3.5 3.5 0 0 0 0 7 h2.5 M46 937.5 h2.5 a3.5 3.5 0 0 1 0 7 h-2.5 M40.5 941 h7" fill="none" stroke="#aaa" stroke-width="1.5"/>
<defs><clipPath id="egg"><path d="M55 962 C64 963 71 975 72.5 990 C73 1004 65 1012 56 1012 C45 1012 37.5 1004 37.5 990 C37.5 975 46 963 55 962Z"/></clipPath><linearGradient id="og" x1="0" y1="0" x2="1" y2="1"><stop offset="0" stop-color="#9a5a30"/><stop offset="0.45" stop-color="#d9893a"/><stop offset="1" stop-color="#c8641e"/></linearGradient></defs>
<g clip-path="url(#egg)"><rect x="35" y="960" width="40" height="55" fill="#c2b4b4"/><path d="M54 960 L76 960 L76 1015 L54 1015 Q60 1000 54 990z" fill="url(#og)"/><path d="M50 966 Q62 962 70 978 Q60 974 54 978z" fill="#7a4028" opacity="0.8"/><ellipse cx="43.5" cy="978.5" rx="3" ry="1.5" fill="#5a4040"/><ellipse cx="65" cy="979.5" rx="3" ry="1.6" fill="#3a1a10"/><path d="M46 997 Q52 993 60 998 Q54 1001 46 997z" fill="#8a3a2a"/><path d="M50 1004 Q55 1000 60 1006 L56 1012 Z" fill="#e8e0e0"/></g>
<path d="M767.5 974 v30" stroke="#4a4a4a" stroke-width="1"/>
<path d="M682.5 987.5 h5 v13.5 h-5z M687.5 987.5 l5.5-8.5 q3-1 3.5 2 l-1 5.5 h7 q2 0 1.8 2.5 l-1.8 10 q-0.5 2-2.5 2 h-12.5" fill="none" stroke="#f1f1f1" stroke-width="1.5" stroke-linejoin="round"/>
<path d="M808.5 990.5 h-5 v-13.5 h5z M803.5 990.5 l-5.5 8.5 q-3 1-3.5-2 l1-5.5 h-7 q-2 0-1.8-2.5 l1.8-10 q0.5-2 2.5-2 h12.5" fill="none" stroke="#f1f1f1" stroke-width="1.5" stroke-linejoin="round"/>
<path d="M859 1000 q3-12 15-12.5 h2 v-6.5 l8 8 l-8 8 v-6 h-2 q-10 0-15 9z" fill="none" stroke="#f1f1f1" stroke-width="1.5" stroke-linejoin="round"/>
<path d="M995.5 978.5 v15 M989.5 988 l6 6 l6-6 M988 1000.5 h15" fill="none" stroke="#f1f1f1" stroke-width="1.5"/>
<circle cx="1140.5" cy="988.5" r="2" fill="#f1f1f1"/><circle cx="1148.5" cy="988.5" r="2" fill="#f1f1f1"/><circle cx="1156.5" cy="988.5" r="2" fill="#f1f1f1"/>
<circle cx="1688.8" cy="991" r="1.9" fill="#f1f1f1"/><circle cx="1688.8" cy="998" r="1.9" fill="#f1f1f1"/><circle cx="1688.8" cy="1005" r="1.9" fill="#f1f1f1"/></svg>
<div class="t" style="left:30.30px;top:899.14px;font-size:26px;color:#f1f1f1;font-weight:bold;font-family:'Liberation Sans';transform:scaleX(0.9339);transform-origin:0 0;">M&amp;M Module2 Tutorial3</div>
<div class="t" style="left:57.50px;top:932.77px;font-size:15.8px;color:#aaaaaa;font-weight:bold;font-family:'Liberation Sans';transform:scaleX(0.8744);transform-origin:0 0;">Unlisted</div>
<div class="t" style="left:95.00px;top:967.29px;font-size:18.8px;color:#f1f1f1;font-weight:bold;font-family:'Liberation Sans';transform:scaleX(0.9988);transform-origin:0 0;">Steve Hudak</div>
<div class="t" style="left:95.00px;top:994.88px;font-size:14.5px;color:#aaaaaa;font-weight:normal;font-family:'Liberation Sans';transform:scaleX(1.0402);transform-origin:0 0;">8 subscribers</div>
<div class="t" style="left:258.00px;top:979.32px;font-size:18px;color:#0f0f0f;font-weight:bold;font-family:'Liberation Sans';transform:scaleX(0.8962);transform-origin:0 0;">Subscribe</div>
<div class="t" style="left:716.40px;top:979.52px;font-size:18px;color:#f1f1f1;font-weight:bold;font-family:'Liberation Sans';transform:scaleX(0.8770);transform-origin:0 0;">Like</div>
<div class="t" style="left:893.00px;top:979.52px;font-size:18px;color:#f1f1f1;font-weight:bold;font-family:'Liberation Sans';transform:scaleX(0.8994);transform-origin:0 0;">Share</div>
<div class="t" style="left:1018.00px;top:979.52px;font-size:18px;color:#f1f1f1;font-weight:bold;font-family:'Liberation Sans';transform:scaleX(0.9070);transform-origin:0 0;">Download</div>
<div class="t" style="left:1216.60px;top:931.32px;font-size:18px;color:#0f0f0f;font-weight:bold;font-family:'Liberation Sans';transform:scaleX(0.8299);transform-origin:0 0;">All</div>
<div class="t" style="left:1276.40px;top:931.32px;font-size:18px;color:#f1f1f1;font-weight:bold;font-family:'Liberation Sans';transform:scaleX(0.8879);transform-origin:0 0;">For you</div>
<div class="t" style="left:1374.00px;top:931.32px;font-size:18px;color:#f1f1f1;font-weight:bold;font-family:'Liberation Sans';transform:scaleX(0.9061);transform-origin:0 0;">Recently uploaded</div>
<div class="t" style="left:1559.00px;top:931.32px;font-size:18px;color:#f1f1f1;font-weight:bold;font-family:'Liberation Sans';transform:scaleX(0.9214);transform-origin:0 0;">Watched</div>
<div class="t" style="left:1421.40px;top:987.34px;font-size:18.5px;color:#f1f1f1;font-weight:bold;font-family:'Liberation Sans';transform:scaleX(0.8822);transform-origin:0 0;">Die With A Smile - Lady Gaga &amp;</div>
<div class="t" style="left:1421.40px;top:1011.84px;font-size:18.5px;color:#f1f1f1;font-weight:bold;font-family:'Liberation Sans';transform:scaleX(0.8685);transform-origin:0 0;">Bruno Mars (Cover)</div>
<div class="a" style="left:1900px;top:109px;width:18px;height:908px;background:#0f0f0f"></div>
<div class="a" style="left:1901px;top:130px;width:17px;height:195px;background:#a8a8a8"></div>
<svg style="left:0;top:0" width="1918" height="1017">
 <path d="M1905 123 L1909.5 118.5 L1914 123Z" fill="#a8a8a8"/>
 <path d="M1905 1006 L1909.5 1010.5 L1914 1006Z" fill="#a8a8a8"/>
</svg>
</body></html>
